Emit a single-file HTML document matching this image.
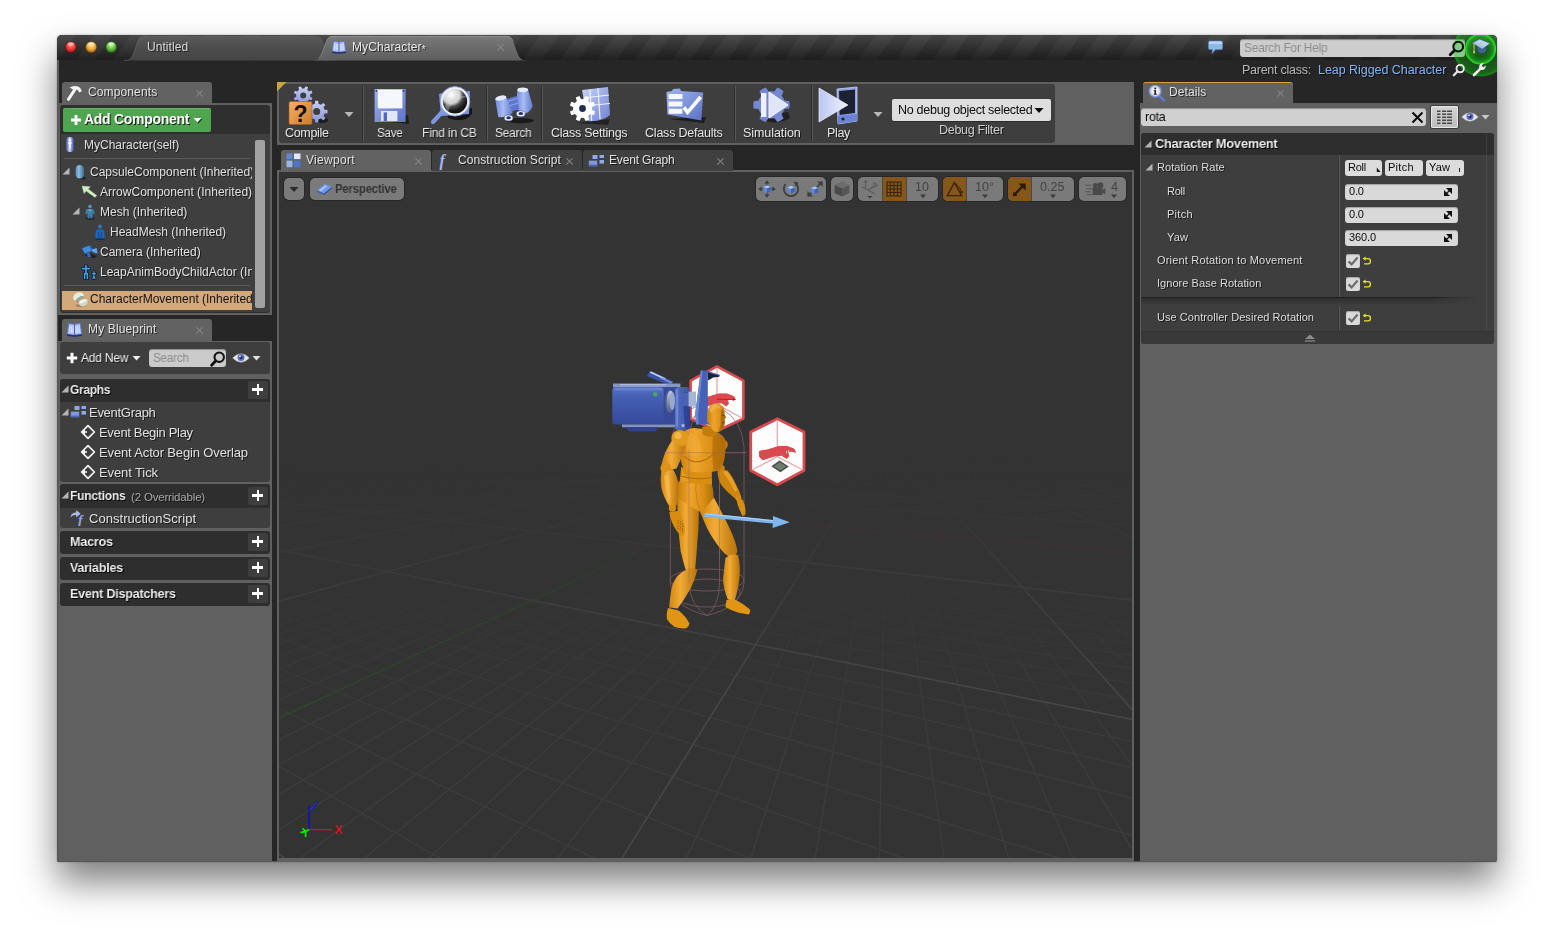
<!DOCTYPE html>
<html lang="en">
<head>
<meta charset="utf-8">
<title>MyCharacter - Blueprint Editor</title>
<style>
html,body{margin:0;padding:0;background:#fff;}
body{width:1554px;height:941px;overflow:hidden;position:relative;font-family:"Liberation Sans",sans-serif;font-size:12px;color:#e4e4e4;}
#shadow{position:absolute;left:57px;top:35px;width:1440px;height:827px;border-radius:5px 5px 2px 2px;box-shadow:0 20px 36px rgba(0,0,0,.50),0 0 2px rgba(0,0,0,.35);}
#win{position:absolute;left:57px;top:35px;width:1440px;height:827px;border-radius:5px 5px 2px 2px;overflow:hidden;background:#606060;}
#pg{position:absolute;left:-57px;top:-35px;width:1554px;height:941px;}
#pg span{will-change:transform;}
#pg div,#pg span,#pg svg{position:absolute;box-sizing:border-box;}
.t{white-space:pre;line-height:16px;height:16px;text-shadow:1px 1px 0 rgba(0,0,0,.6);color:#e0e0e0;}
.b{font-weight:bold;}
.dk{background:#262626;}
.x{width:8px;height:8px;}
.x:before,.x:after{content:"";position:absolute;left:3.5px;top:0px;width:1px;height:8.6px;background:#888;}
.x:before{transform:rotate(45deg);}
.x:after{transform:rotate(-45deg);}
.sec{background:#3e3e3e;border-radius:3px;}
.sech{background:#2e2e2e;border-radius:3px 3px 0 0;}
.plus{width:20px;height:18px;background:#3e3e3e;border-radius:2px;}
.plus:before{content:"";position:absolute;left:4.4px;top:7.4px;width:11px;height:2.4px;background:#fff;}
.plus:after{content:"";position:absolute;left:8.7px;top:3px;width:2.4px;height:11px;background:#fff;}
.h{font-size:13.5px;color:#ececec;text-shadow:1px 1px 0 #000;line-height:18px;height:18px;}
.m{font-size:13px;}
.tsep{top:86px;width:2px;height:55px;background:#585858;border-left:1px solid #2c2c2c;}
.tl{font-size:12.5px;color:#e6e6e6;}
.vb{height:24px;background:#7a7a7a;border-radius:5px;box-shadow:0 0 0 1px rgba(36,36,36,.7);}
.vo{height:24px;background:#86571b;}
.s{font-size:11px;color:#dcdcdc;}
.k{white-space:pre;line-height:16px;height:16px;font-size:11px;color:#0a0a0a;}
.lb{height:16px;background:#dcdcdc;border-radius:3px;}
.vbx{width:113px;height:16px;background:#d9d9d9;border-radius:3px;box-shadow:inset 0 1px 1px rgba(0,0,0,.25);}
.cb{width:14px;height:14px;background:#dadada;border-radius:2px;box-shadow:inset 0 1px 1px rgba(0,0,0,.25);}
.gl{stroke:#3c3c3c;stroke-width:1.5;}
.gM{stroke:#464646;stroke-width:1.7;}
.gR{stroke:#553030;stroke-width:1.4;}
.gG{stroke:#2d482d;stroke-width:1.5;}
.vn{white-space:pre;line-height:16px;height:16px;font-size:12.5px;color:#444;}
#t_untitled{letter-spacing:0.055px;margin-left:0.0px;}
#t_mychar{letter-spacing:0.087px;margin-left:0.1px;}
#t_sfh{letter-spacing:-0.199px;margin-left:0.0px;transform:scaleX(0.947);transform-origin:0 50%;}
#t_pc{letter-spacing:-0.261px;margin-left:0.0px;}
#t_lrc{letter-spacing:-0.046px;margin-left:0.2px;}
#t_components{letter-spacing:0.121px;margin-left:-0.2px;}
#t_addcomp{letter-spacing:-0.278px;margin-left:-0.6px;}
#t_c0{letter-spacing:-0.004px;margin-left:-0.2px;}
#t_c2{letter-spacing:0.027px;margin-left:-0.1px;}
#t_myblueprint{letter-spacing:0.139px;margin-left:-0.2px;}
#t_addnew{letter-spacing:-0.243px;margin-left:-0.2px;transform:scaleX(0.964);transform-origin:0 50%;}
#t_search{letter-spacing:-0.231px;margin-left:0.0px;transform:scaleX(0.934);transform-origin:0 50%;}
#t_graphs{letter-spacing:-0.292px;margin-left:0.2px;transform:scaleX(0.883);transform-origin:0 50%;}
#t_functions{letter-spacing:-0.255px;margin-left:0.2px;transform:scaleX(0.892);transform-origin:0 50%;}
#t_overr{letter-spacing:-0.180px;margin-left:-0.2px;}
#t_macros{letter-spacing:-0.275px;margin-left:0.2px;transform:scaleX(0.937);transform-origin:0 50%;}
#t_variables{letter-spacing:-0.227px;margin-left:0.2px;transform:scaleX(0.924);transform-origin:0 50%;}
#t_evdisp{letter-spacing:-0.231px;margin-left:0.2px;transform:scaleX(0.929);transform-origin:0 50%;}
#t_eventgraph{letter-spacing:-0.282px;margin-left:-0.2px;}
#t_eabo{letter-spacing:-0.146px;margin-left:-0.1px;}
#t_cscript{letter-spacing:0.050px;margin-left:-0.2px;}
#t_ebp{letter-spacing:-0.330px;margin-left:-0.1px;}
#t_etick{letter-spacing:-0.102px;margin-left:-0.1px;}
#t_compile{letter-spacing:-0.317px;margin-left:-0.1px;}
#t_save{letter-spacing:-0.262px;margin-left:0.1px;transform:scaleX(0.932);transform-origin:0 50%;}
#t_findcb{letter-spacing:-0.190px;margin-left:-0.1px;transform:scaleX(0.969);transform-origin:0 50%;}
#t_searchtb{letter-spacing:-0.226px;margin-left:-0.3px;transform:scaleX(0.954);transform-origin:0 50%;}
#t_classset{letter-spacing:-0.252px;margin-left:-0.2px;}
#t_classdef{letter-spacing:-0.214px;margin-left:-0.2px;}
#t_simulation{letter-spacing:-0.061px;margin-left:-0.5px;}
#t_play{letter-spacing:-0.322px;margin-left:-0.2px;}
#t_nodebug{letter-spacing:-0.280px;margin-left:-0.5px;}
#t_dbgfilter{letter-spacing:-0.295px;margin-left:-0.2px;}
#t_viewport{letter-spacing:0.295px;margin-left:0.3px;}
#t_conscript{letter-spacing:0.088px;margin-left:-0.1px;}
#t_evgraph{letter-spacing:-0.160px;margin-left:-0.5px;}
#t_persp{letter-spacing:-0.220px;margin-left:0.1px;transform:scaleX(0.910);transform-origin:0 50%;}
#t_details{letter-spacing:0.110px;margin-left:-0.5px;}
#t_rota{letter-spacing:-0.202px;margin-left:-0.1px;transform:scaleX(0.949);transform-origin:0 50%;}
#t_charmov{letter-spacing:-0.242px;margin-left:-0.5px;transform:scaleX(0.947);transform-origin:0 50%;}
#t_rotrate{letter-spacing:0.035px;margin-left:-0.5px;}
#t_roll{letter-spacing:-0.272px;margin-left:-0.2px;}
#t_pitch{letter-spacing:0.274px;margin-left:-0.2px;}
#t_yaw{letter-spacing:0.203px;margin-left:-0.2px;}
#t_orient{letter-spacing:0.184px;margin-left:-0.5px;}
#t_ignore{letter-spacing:0.048px;margin-left:-0.5px;}
#t_usectrl{letter-spacing:0.056px;margin-left:-0.5px;}
#t_bRoll{letter-spacing:-0.272px;margin-left:-0.2px;}
#t_bPitch{letter-spacing:0.274px;margin-left:-0.3px;}
#t_bYaw{letter-spacing:0.202px;margin-left:-0.1px;}
#t_v0{letter-spacing:-0.159px;margin-left:-0.2px;}
#t_v1{letter-spacing:-0.159px;margin-left:-0.2px;}
#t_v2{letter-spacing:-0.118px;margin-left:-0.2px;}

</style>
</head>
<body>
<div id="shadow"></div>
<div id="win"><div id="pg">

<!-- ===== base areas ===== -->
<div class="dk" style="left:57px;top:35px;width:1440px;height:68px;"></div>
<div class="dk" style="left:272px;top:82px;width:5px;height:780px;"></div>
<div class="dk" style="left:1134px;top:82px;width:6px;height:780px;"></div>

<!-- ===== TITLEBAR ===== -->
<div style="left:57px;top:35px;width:1440px;height:25px;background:linear-gradient(to bottom,rgba(255,255,255,.13),rgba(255,255,255,.05) 40%,rgba(0,0,0,.30)),repeating-linear-gradient(125deg,#303030 0,#303030 14.5px,#282828 15.5px,#282828 29.5px,#303030 30.5px);"></div>
<svg style="left:57px;top:35px;" width="1440" height="26" viewBox="57 35 1440 26">
  <defs>
    <linearGradient id="tabA" x1="0" y1="0" x2="0" y2="1"><stop offset="0" stop-color="#7b7b7b"/><stop offset=".5" stop-color="#6a6a6a"/><stop offset="1" stop-color="#5f5f5f"/></linearGradient>
    <linearGradient id="tabI" x1="0" y1="0" x2="0" y2="1"><stop offset="0" stop-color="#5a5a5a"/><stop offset=".5" stop-color="#4c4c4c"/><stop offset="1" stop-color="#454545"/></linearGradient>
    <radialGradient id="tlr" cx=".5" cy=".35" r=".65"><stop offset="0" stop-color="#ff8a80"/><stop offset=".55" stop-color="#ee3b3b"/><stop offset="1" stop-color="#a31818"/></radialGradient>
    <radialGradient id="tly" cx=".5" cy=".35" r=".65"><stop offset="0" stop-color="#ffe39a"/><stop offset=".55" stop-color="#f4ae3c"/><stop offset="1" stop-color="#a86a12"/></radialGradient>
    <radialGradient id="tlg" cx=".5" cy=".35" r=".65"><stop offset="0" stop-color="#c9f29a"/><stop offset=".55" stop-color="#69c343"/><stop offset="1" stop-color="#2f7d1c"/></radialGradient>
  </defs>
  <path d="M124 60.5 C131 60.5 132 57 134 52 L138 41 C139.5 37.5 141 36.2 145 36.2 L316 36.2 C320 36.2 321.5 37.5 323 41 L327 52 C329 57 330 60.5 337 60.5 Z" fill="url(#tabI)"/>
  <path d="M124 60.5 C131 60.5 132 57 134 52 L138 41 C139.5 37.5 141 36.2 145 36.2 L316 36.2" fill="none" stroke="#6a6a6a" stroke-width=".8" opacity=".7"/>
  <path d="M312 60.5 C319 60.5 320.5 57 322.5 52 L326.5 41 C328 37.5 329.5 36 333.5 36 L506 36 C510 36 511.5 37.5 513 41 L517 52 C519 57 520.5 60.5 527 60.5 Z" fill="url(#tabA)"/>
  <path d="M319 58 C321 56 321.5 54.5 322.5 52 L326.5 41 C328 37.5 329.5 36.3 333.5 36.3 L506 36.3 C510 36.3 511.5 37.5 513 41" fill="none" stroke="#9a9a9a" stroke-width=".8" opacity=".8"/>
  <circle cx="70.8" cy="47.2" r="5.8" fill="#5d1010"/><circle cx="70.8" cy="47" r="5.2" fill="url(#tlr)"/>
  <circle cx="91.2" cy="47.2" r="5.8" fill="#6b4708"/><circle cx="91.2" cy="47" r="5.2" fill="url(#tly)"/>
  <circle cx="111.2" cy="47.2" r="5.8" fill="#1f5212"/><circle cx="111.2" cy="47" r="5.2" fill="url(#tlg)"/>
  <ellipse cx="70.8" cy="44" rx="3.2" ry="1.8" fill="#fff" opacity=".45"/>
  <ellipse cx="91.2" cy="44" rx="3.2" ry="1.8" fill="#fff" opacity=".5"/>
  <ellipse cx="111.2" cy="44" rx="3.2" ry="1.8" fill="#fff" opacity=".5"/>
</svg>
<span class="t" id="t_untitled" style="left:147px;top:39px;color:#d8d8d8;">Untitled</span>
<!-- blueprint book icon -->
<svg style="left:331px;top:39px;" width="16" height="16" viewBox="0 0 16 16">
  <path d="M1 12.5 L2.6 2.2 L7.6 3 L8.4 3 L13.4 2.2 L15 12.5 L8.6 13.3 L7.4 13.3 Z" fill="#a9bdf0" stroke="#5570c8" stroke-width=".8"/>
  <path d="M8 3 L8 13.2" stroke="#4a63b8" stroke-width="1"/>
  <path d="M3.6 4.5v6.5M5.2 4.7v6.5M6.6 4.9v6.5M9.4 4.9v6.5M10.8 4.7v6.5M12.4 4.5v6.5" stroke="#e8eeff" stroke-width=".7"/>
  <path d="M1 12.5 L7.4 13.3 L8.6 13.3 L15 12.5 L15 14 L8.6 14.8 L7.4 14.8 L1 14 Z" fill="#23306a"/>
</svg>
<span class="t" id="t_mychar" style="left:352px;top:39px;color:#e8e8e8;">MyCharacter<span style="position:static;font-size:10px;vertical-align:-2px;">*</span></span>
<span class="x" style="left:496px;top:43px;"></span>
<!-- speech bubble -->
<svg style="left:1207px;top:39px;" width="17" height="17" viewBox="0 0 17 17">
  <path d="M3 2 H14 Q15.5 2 15.5 3.5 V9 Q15.5 10.5 14 10.5 H8.5 L5 14.5 L5.6 10.5 H3 Q1.5 10.5 1.5 9 V3.5 Q1.5 2 3 2 Z" fill="#8fb8ea" stroke="#5d8fd0" stroke-width=".6"/>
  <path d="M3 2.6 H14 Q15 2.6 15 3.6 V5 H2 V3.6 Q2 2.6 3 2.6Z" fill="#b7d3f6"/>
</svg>
<!-- search for help -->
<div style="left:1240px;top:39px;width:225px;height:18px;background:#cdcdcd;border-radius:3px;box-shadow:inset 0 1px 1px rgba(0,0,0,.35);"></div>
<span id="t_sfh" style="left:1244px;top:40px;white-space:pre;line-height:16px;font-size:12.5px;color:#8c8c8c;">Search For Help</span>
<!-- green tutorial pulse -->
<div style="left:1452.6px;top:21px;width:56px;height:56px;border-radius:50%;background:radial-gradient(circle closest-side,rgba(0,190,0,.30) 0,rgba(0,190,0,.30) 62%,rgba(0,200,0,.36) 85%,rgba(10,210,10,.55) 96%,rgba(10,210,10,0) 100%);"></div>
<div style="left:1464.4px;top:32.8px;width:32.4px;height:32.4px;border-radius:50%;background:radial-gradient(circle closest-side,rgba(10,120,10,.10) 0,rgba(10,150,10,.18) 50%,rgba(20,190,20,.5) 78%,rgba(40,225,40,.95) 94%,rgba(40,225,40,0) 100%);"></div>
<!-- magnifier in search box -->
<svg style="left:1448px;top:39px;" width="18" height="18" viewBox="0 0 18 18">
  <circle cx="10.2" cy="7.6" r="4.9" fill="none" stroke="#101010" stroke-width="2.1"/>
  <path d="M6.6 11.2 L2.2 15.8" stroke="#101010" stroke-width="2.8" stroke-linecap="round"/>
</svg>
<!-- graduation cap -->
<svg style="left:1471px;top:38px;" width="20" height="18" viewBox="0 0 20 18">
  <path d="M6 8.4 L6.6 14 Q11 17.6 15.6 13 L15 7.4 Z" fill="#3e6488" stroke="#27415c" stroke-width=".5"/>
  <path d="M8.6 1.4 L18.4 5.6 L11.2 10.8 L1.6 5Z" fill="#a9c8ec" stroke="#6f94c4" stroke-width=".5"/>
  <path d="M8.6 1.4 L18.4 5.6 L14 8.6 L5 4Z" fill="#c4dcf6" opacity=".7"/>
  <path d="M3 5.8 V13.6" stroke="#e0b860" stroke-width="1"/>
  <path d="M2.2 13 H3.8 V15.4 H2.2Z" fill="#e8c46a"/>
  <circle cx="9.6" cy="5.4" r=".9" fill="#e0b860"/>
</svg>
<span class="t" id="t_pc" style="left:1242px;top:62px;font-size:12.5px;color:#b9b9b9;">Parent class:</span>
<span class="t" id="t_lrc" style="left:1318px;top:62px;font-size:12.5px;color:#86b6f4;text-shadow:1px 1px 0 rgba(0,0,0,.8);">Leap Rigged Character</span>
<svg style="left:1452px;top:63px;" width="14" height="14" viewBox="0 0 14 14">
  <circle cx="8.2" cy="5.6" r="3.7" fill="none" stroke="#e6e6e6" stroke-width="1.9"/>
  <path d="M5.4 8.5 L1.8 12.2" stroke="#e6e6e6" stroke-width="2.3" stroke-linecap="round"/>
</svg>
<svg style="left:1472px;top:62px;" width="15" height="15" viewBox="0 0 15 15">
  <path d="M2 13 L8.2 6.8" stroke="#efefef" stroke-width="2.6" stroke-linecap="round"/>
  <path d="M13.6 3.2 L11.4 5.4 L9.6 3.6 L11.8 1.4 A3.6 3.6 0 0 0 7.3 6 L8.9 7.7 A3.6 3.6 0 0 0 13.6 3.2 Z" fill="#efefef"/>
</svg>

<div style="left:57px;top:60px;width:1.5px;height:802px;background:#5a5a5a;"></div>
<!-- bottom edge --><div style="left:57px;top:861px;width:1440px;height:1px;background:#565656;"></div>


<!-- ===== LEFT COLUMN ===== -->
<!-- Components tab -->
<div style="left:62px;top:82px;width:150px;height:21.4px;background:#626262;border-radius:3px 3px 0 0;"></div>
<svg style="left:65px;top:84px;" width="18" height="18" viewBox="0 0 18 18">
  <path d="M3.4 15.4 L9.8 5.6" stroke="#f4f4f4" stroke-width="2.9" stroke-linecap="round"/>
  <path d="M4.6 3.4 Q9.4 .6 14 3 Q16.2 4.4 16.8 7.2 L14.2 8.4 Q13.4 5.8 11.6 5.4 L10.6 7 L7.2 5 Z" fill="#f4f4f4"/>
</svg>
<span class="t" id="t_components" style="left:88px;top:84px;">Components</span>
<span class="x" style="left:195px;top:89px;"></span>
<!-- Components panel -->
<div style="left:60px;top:105px;width:210px;height:208px;background:#2f2f2f;border-radius:3px;"></div>
<div style="left:61px;top:134px;width:209px;height:178px;background:#3f3f3f;border-radius:0 0 3px 3px;"></div>
<div style="left:63px;top:108px;width:148px;height:24px;background:#4fa54f;border-radius:2px;box-shadow:inset 0 1px 0 rgba(255,255,255,.12);"></div>
<svg style="left:70px;top:114px;" width="12" height="12" viewBox="0 0 12 12"><path d="M6 1v10M1 6h10" stroke="#fff" stroke-width="2.8"/><path d="M7.2 2v10M2 7.2h10" stroke="#000" stroke-width="0" /></svg>
<span class="t b" id="t_addcomp" style="left:85px;top:110.4px;font-size:14px;line-height:18px;height:18px;color:#fff;text-shadow:1px 1px 0 rgba(0,0,0,.85);">Add Component</span>
<svg style="left:193px;top:117px;" width="10" height="7" viewBox="0 0 10 7"><path d="M1.5 2 L9.5 2 L5.5 6.5Z" fill="#000" opacity=".7"/><path d="M.5 1 L8.5 1 L4.5 5.5Z" fill="#fff"/></svg>

<!-- rows -->
<div style="left:62px;top:291px;width:190px;height:19px;background:#d4a979;"></div>
<div style="left:64px;top:158px;width:186px;height:1px;background:#5c5c5c;"></div>
<div style="left:64px;top:285px;width:186px;height:1px;background:#5c5c5c;"></div>
<div style="left:255px;top:140px;width:10px;height:168px;background:#a2a2a2;border-radius:2px;"></div>
<div id="complist" style="left:61px;top:134px;width:191px;height:178px;overflow:hidden;">
  <span class="t" id="t_c0" style="left:23px;top:3px;">MyCharacter(self)</span>
  <span class="t" id="t_c1" style="left:29px;top:30px;">CapsuleComponent (Inherited)</span>
  <span class="t" id="t_c2" style="left:39px;top:50px;">ArrowComponent (Inherited)</span>
  <span class="t" id="t_c3" style="left:39px;top:70px;">Mesh (Inherited)</span>
  <span class="t" id="t_c4" style="left:49px;top:90px;">HeadMesh (Inherited)</span>
  <span class="t" id="t_c5" style="left:39px;top:110px;">Camera (Inherited)</span>
  <span class="t" id="t_c6" style="left:39px;top:130px;">LeapAnimBodyChildActor (Inherited)</span>
  <span class="t" id="t_c7" style="left:29px;top:157px;color:#111;text-shadow:none;">CharacterMovement (Inherited)</span>
</div>
<!-- tree arrows -->
<svg style="left:62.4px;top:167.4px;" width="8" height="8" viewBox="0 0 8 8"><path d="M7.5 .5V7.5H.5Z" fill="#b4b4b4"/></svg>
<svg style="left:72.4px;top:207.2px;" width="8" height="8" viewBox="0 0 8 8"><path d="M7.5 .5V7.5H.5Z" fill="#b4b4b4"/></svg>
<!-- component icons -->
<svg style="left:64px;top:136px;" width="12" height="17" viewBox="0 0 12 17">
  <defs><linearGradient id="gcap" x1="0" y1="0" x2="1" y2="0"><stop offset="0" stop-color="#3e4fa8"/><stop offset=".45" stop-color="#c9d6ff"/><stop offset="1" stop-color="#3848a0"/></linearGradient></defs>
  <rect x="2" y="1" width="8" height="15" rx="4" fill="url(#gcap)"/>
  <circle cx="6" cy="4" r="1.3" fill="#fff"/><path d="M6 5.6v7" stroke="#fff" stroke-width="1.6"/><path d="M4 7h4" stroke="#fff" stroke-width="1"/>
</svg>
<svg style="left:74px;top:164px;" width="13" height="16" viewBox="0 0 13 16">
  <defs><linearGradient id="gcap2" x1="0" y1="0" x2="1" y2="0"><stop offset="0" stop-color="#4f86b8"/><stop offset=".38" stop-color="#8fc0dc"/><stop offset="1" stop-color="#38689a"/></linearGradient></defs>
  <ellipse cx="8" cy="14" rx="4" ry="1.5" fill="#1a1a1a" opacity=".7"/>
  <rect x="1.5" y="1" width="8.5" height="13.5" rx="4.2" fill="url(#gcap2)"/>
</svg>
<svg style="left:81px;top:185px;" width="17" height="14" viewBox="0 0 17 14">
  <path d="M5 10 L16 13.5 L14 12Z" fill="#1c1c1c" opacity=".6"/>
  <path d="M1 1 L9.5 1.8 L7.2 4 L15.8 10.6 L14 12.6 L5.2 6 L3 8.6 Z" fill="#d2f0c8" stroke="#9fd092" stroke-width=".4"/>
</svg>
<svg style="left:84px;top:204px;" width="12" height="16" viewBox="0 0 12 16">
  <ellipse cx="6" cy="14.5" rx="4.5" ry="1.2" fill="#151515" opacity=".7"/>
  <circle cx="6" cy="2.4" r="1.7" fill="#5f9cc4"/>
  <path d="M2.2 5.6 Q6 4 9.8 5.6 L10.6 10 L9 10 L8.6 7.6 L8.4 14.4 L6.6 14.4 L6 10.6 L5.4 14.4 L3.6 14.4 L3.4 7.6 L3 10 L1.4 10 Z" fill="#3f7fae"/>
  <path d="M4.2 5.4 L6 7.6 L7.8 5.4" fill="#7fb6d8"/>
</svg>
<svg style="left:94px;top:224px;" width="12" height="16" viewBox="0 0 12 16">
  <ellipse cx="6" cy="14.8" rx="4.8" ry="1" fill="#151515" opacity=".7"/>
  <circle cx="6" cy="2.6" r="2" fill="#2f78c0"/>
  <path d="M1.8 6.4 Q6 4 10.2 6.4 L10.8 14.4 L1.2 14.4 Z" fill="#1f66b8"/>
  <path d="M4.6 8 L4.6 14.4 M7.4 8 L7.4 14.4" stroke="#0f3f7c" stroke-width=".8"/>
</svg>
<svg style="left:81px;top:244px;" width="18" height="15" viewBox="0 0 18 15">
  <path d="M3 11 L13 14.5 L16 12 L8 9Z" fill="#151515" opacity=".7"/>
  <path d="M1 4.2 L8.5 1.5 L11 6.8 L3.6 9.6 Z" fill="#3e8ee0"/>
  <path d="M8.5 1.5 L10 1 L12.4 6.2 L11 6.8Z" fill="#1f5ba6"/>
  <path d="M10.6 5.4 L15.6 4 L16.6 9.6 L11.6 8Z" fill="#5aa6f0"/>
  <path d="M5.2 9 L7 13 L10.4 13 L8 8Z" fill="#2a6cc0"/>
</svg>
<svg style="left:81px;top:264px;" width="17" height="16" viewBox="0 0 17 16">
  <g fill="none" stroke-linecap="round" stroke-linejoin="round">
  <path d="M5 1.4 V9.6 M1.4 4.6 H8.6 M3.6 14.6 V9.6 H6.4 V14.6" stroke="#081626" stroke-width="3.2"/>
  <path d="M13 7.4 V11.6 M11.4 9.6 H14.6 M12 14.8 L13 11.6 L14 14.8" stroke="#081626" stroke-width="2.6"/>
  <path d="M5 1.4 V9.6 M1.4 4.6 H8.6 M3.6 14.6 V9.6 H6.4 V14.6" stroke="#3fa2e6" stroke-width="1.6"/>
  <path d="M13 7.4 V11.6 M11.4 9.6 H14.6 M12 14.8 L13 11.6 L14 14.8" stroke="#3fa2e6" stroke-width="1.2"/>
  </g>
</svg>
<svg style="left:72px;top:291px;" width="17" height="17" viewBox="0 0 17 17">
  <ellipse cx="9" cy="14.6" rx="5.6" ry="1.6" fill="#6d5a40" opacity=".45"/>
  <path d="M1.4 8.6 Q.6 2.4 6.4 1.2 Q11.4 .6 12.2 5.2 Q7 4.4 3.6 9.6 Q2 9.6 1.4 8.6Z" fill="#e6eee2"/>
  <path d="M3.6 9.6 Q7 4.4 12.2 5.2 Q11.4 7.6 8.6 9 Q5.6 10.4 3.6 9.6Z" fill="#98aa98"/>
  <path d="M6.2 11.6 Q9.4 7.4 15.4 8.4 Q16.6 13.2 12.4 15.4 Q7.8 16.4 6.2 11.6Z" fill="#cbd9c6"/>
  <path d="M6.2 11.6 Q9.4 7.4 15.4 8.4 Q13.4 11.6 9.6 12.4 Q7.4 12.6 6.2 11.6Z" fill="#eef4ea"/>
  <path d="M4.6 10.2 L7 11.4" stroke="#7a6a50" stroke-width=".8"/>
</svg>

<!-- My Blueprint tab -->
<div class="dk" style="left:58px;top:315px;width:214px;height:26px;"></div>
<div style="left:62px;top:319px;width:150px;height:22px;background:#626262;border-radius:3px 3px 0 0;"></div>
<svg style="left:66px;top:321px;" width="17" height="17" viewBox="0 0 16 16">
  <path d="M1 12.5 L2.6 2.2 L7.6 3 L8.4 3 L13.4 2.2 L15 12.5 L8.6 13.3 L7.4 13.3 Z" fill="#a9bdf0" stroke="#5570c8" stroke-width=".8"/>
  <path d="M8 3 L8 13.2" stroke="#4a63b8" stroke-width="1"/>
  <path d="M3.6 4.5v6.5M5.2 4.7v6.5M6.6 4.9v6.5M9.4 4.9v6.5M10.8 4.7v6.5M12.4 4.5v6.5" stroke="#e8eeff" stroke-width=".7"/>
  <path d="M1 12.5 L7.4 13.3 L8.6 13.3 L15 12.5 L15 14 L8.6 14.8 L7.4 14.8 L1 14 Z" fill="#23306a"/>
</svg>
<span class="t" id="t_myblueprint" style="left:88px;top:321px;">My Blueprint</span>
<span class="x" style="left:195px;top:326px;"></span>
<!-- toolbar -->
<div style="left:60px;top:342px;width:210px;height:32px;background:#3e3e3e;border-radius:3px;"></div>
<svg style="left:66px;top:352px;" width="12" height="12" viewBox="0 0 12 12"><path d="M6 .8v10.4M.8 6h10.4" stroke="#fff" stroke-width="2.9"/></svg>
<span class="t" id="t_addnew" style="left:81px;top:350px;font-size:12.5px;color:#f0f0f0;">Add New</span>
<svg style="left:132px;top:355px;" width="10" height="7" viewBox="0 0 10 7"><path d="M.5 1 L8.5 1 L4.5 5.5Z" fill="#f0f0f0"/></svg>
<div style="left:149px;top:349px;width:77px;height:18px;background:#cbcbcb;border-radius:3px;box-shadow:inset 0 1px 1px rgba(0,0,0,.3);"></div>
<span id="t_search" style="left:153px;top:350px;white-space:pre;line-height:16px;font-size:12.5px;color:#8c8c8c;">Search</span>
<svg style="left:209px;top:350px;" width="18" height="18" viewBox="0 0 18 18">
  <circle cx="10.2" cy="7.2" r="4.7" fill="none" stroke="#101010" stroke-width="2.1"/>
  <path d="M6.8 10.8 L2.6 15.2" stroke="#101010" stroke-width="2.8" stroke-linecap="round"/>
</svg>
<svg class="eye" style="left:232px;top:352px;" width="18" height="12" viewBox="0 0 18 12">
  <path d="M.6 6 Q9 -2.4 17.4 6 Q9 14.4 .6 6Z" fill="#e9e9e9" stroke="#9a9a9a" stroke-width=".6"/>
  <circle cx="9" cy="5.6" r="3.5" fill="#5a6fc0"/><circle cx="9" cy="5.6" r="1.6" fill="#1d2a66"/><circle cx="8" cy="4.4" r=".9" fill="#dfe6ff"/>
</svg>
<svg style="left:252px;top:355px;" width="10" height="7" viewBox="0 0 10 7"><path d="M.5 1 L8.5 1 L4.5 5.5Z" fill="#e0e0e0"/></svg>

<!-- sections -->
<div class="sec" style="left:60px;top:379px;width:210px;height:103px;"></div>
<div class="sech" style="left:60px;top:379px;width:210px;height:23px;"></div>
<div class="sec" style="left:60px;top:484px;width:210px;height:44px;"></div>
<div class="sech" style="left:60px;top:484px;width:210px;height:24px;"></div>
<div class="sech" style="left:60px;top:531px;width:210px;height:23px;border-radius:3px;"></div>
<div class="sech" style="left:60px;top:557px;width:210px;height:23px;border-radius:3px;"></div>
<div class="sech" style="left:60px;top:583px;width:210px;height:23px;border-radius:3px;"></div>
<div class="plus" style="left:248px;top:381px;"></div>
<div class="plus" style="left:248px;top:487px;"></div>
<div class="plus" style="left:248px;top:533px;"></div>
<div class="plus" style="left:248px;top:559px;"></div>
<div class="plus" style="left:248px;top:585px;"></div>
<svg style="left:61px;top:385px;" width="8" height="8" viewBox="0 0 8 8"><path d="M7.5 .5V7.5H.5Z" fill="#b4b4b4"/></svg>
<svg style="left:61px;top:408px;" width="8" height="8" viewBox="0 0 8 8"><path d="M7.5 .5V7.5H.5Z" fill="#b4b4b4"/></svg>
<svg style="left:61px;top:491px;" width="8" height="8" viewBox="0 0 8 8"><path d="M7.5 .5V7.5H.5Z" fill="#b4b4b4"/></svg>
<span class="t b h" id="t_graphs" style="left:70px;top:381px;">Graphs</span>
<span class="t b h" id="t_functions" style="left:70px;top:487px;">Functions</span>
<span class="t" id="t_overr" style="left:131px;top:489px;font-size:11.5px;color:#a8a8a8;">(2 Overridable)</span>
<span class="t b h" id="t_macros" style="left:70px;top:533px;">Macros</span>
<span class="t b h" id="t_variables" style="left:70px;top:559px;">Variables</span>
<span class="t b h" id="t_evdisp" style="left:70px;top:585px;">Event Dispatchers</span>
<!-- event graph icon -->
<svg class="egi" style="left:70px;top:405px;" width="17" height="14" viewBox="0 0 17 14">
  <rect x="4.5" y="1" width="5" height="4" fill="#8fa8e6"/><rect x="11.5" y="1" width="4.5" height="3" fill="#8fa8e6"/>
  <rect x=".8" y="6.6" width="8.4" height="5.6" fill="#7f98dc"/><rect x="11.5" y="6" width="4.5" height="3.6" fill="#8fa8e6"/>
  <rect x=".8" y="10.6" width="8.4" height="1.6" fill="#4e64b4"/>
</svg>
<span class="t m" id="t_eventgraph" style="left:89px;top:405px;">EventGraph</span>
<svg class="dia" style="left:80px;top:424px;" width="16" height="16" viewBox="0 0 16 16"><path d="M8 1.6 L14.4 8 L8 14.4 L1.6 8Z" fill="none" stroke="#f4f4f4" stroke-width="1.7" stroke-linejoin="round"/><path d="M1.6 8 L5 5.4 V10.6Z" fill="#f4f4f4"/><path d="M4 8H7" stroke="#f4f4f4" stroke-width="1.6"/></svg>
<svg class="dia" style="left:80px;top:444px;" width="16" height="16" viewBox="0 0 16 16"><path d="M8 1.6 L14.4 8 L8 14.4 L1.6 8Z" fill="none" stroke="#f4f4f4" stroke-width="1.7" stroke-linejoin="round"/><path d="M1.6 8 L5 5.4 V10.6Z" fill="#f4f4f4"/><path d="M4 8H7" stroke="#f4f4f4" stroke-width="1.6"/></svg>
<svg class="dia" style="left:80px;top:464px;" width="16" height="16" viewBox="0 0 16 16"><path d="M8 1.6 L14.4 8 L8 14.4 L1.6 8Z" fill="none" stroke="#f4f4f4" stroke-width="1.7" stroke-linejoin="round"/><path d="M1.6 8 L5 5.4 V10.6Z" fill="#f4f4f4"/><path d="M4 8H7" stroke="#f4f4f4" stroke-width="1.6"/></svg>
<span class="t m" id="t_ebp" style="left:99px;top:425px;">Event Begin Play</span>
<span class="t m" id="t_eabo" style="left:99px;top:445px;">Event Actor Begin Overlap</span>
<span class="t m" id="t_etick" style="left:99px;top:465px;">Event Tick</span>
<!-- function icon -->
<svg style="left:69px;top:509px;" width="18" height="17" viewBox="0 0 18 17">
  <path d="M1.6 8.2 Q2.2 3.6 7.2 3.6 V1 L11.6 4.8 L7.2 8.6 V6 Q3.6 5.8 1.6 8.2Z" fill="#a9bdf0"/>
  <text x="9" y="15.5" font-family="Liberation Serif,serif" font-style="italic" font-weight="bold" font-size="14" fill="#8ea6ea">f</text>
</svg>
<span class="t m" id="t_cscript" style="left:89px;top:511px;">ConstructionScript</span>


<!-- ===== CENTER ===== -->
<!-- toolbar strip -->
<div style="left:277px;top:82px;width:857px;height:63px;background:#606060;"></div>
<div style="left:279px;top:84px;width:776px;height:59px;background:#3e3e3e;border-radius:3px;"></div>
<svg style="left:277px;top:82px;" width="10" height="10" viewBox="0 0 10 10"><path d="M0 0H9.5L0 9.5Z" fill="#c9a43a"/></svg>
<div class="tsep" style="left:362px;"></div><div class="tsep" style="left:486px;"></div><div class="tsep" style="left:541px;"></div><div class="tsep" style="left:734px;"></div><div class="tsep" style="left:811px;"></div>
<!-- Compile icon -->
<svg style="left:286px;top:84px;" width="44" height="42" viewBox="0 0 44 42">
  <defs>
    <linearGradient id="gq" x1="0" y1="0" x2="1" y2="1"><stop offset="0" stop-color="#f4b06a"/><stop offset="1" stop-color="#d07a2c"/></linearGradient>
    <linearGradient id="gg" x1="0" y1="0" x2="0" y2="1"><stop offset="0" stop-color="#c8d0f4"/><stop offset="1" stop-color="#8a96d6"/></linearGradient>
    
  </defs>
  <ellipse cx="36" cy="36" rx="6" ry="3" fill="#111" opacity=".8"/>
  <path d="M24.11 12.63L26.50 13.86A9.60 9.60 0 0 1 25.48 16.36L22.91 15.55A7.00 7.00 0 0 1 21.29 17.18L22.11 19.75A9.60 9.60 0 0 1 19.61 20.79L18.37 18.40A7.00 7.00 0 0 1 16.07 18.41L14.84 20.80A9.60 9.60 0 0 1 12.34 19.78L13.15 17.21A7.00 7.00 0 0 1 11.52 15.59L8.95 16.41A9.60 9.60 0 0 1 7.91 13.91L10.30 12.67A7.00 7.00 0 0 1 10.29 10.37L7.90 9.14A9.60 9.60 0 0 1 8.92 6.64L11.49 7.45A7.00 7.00 0 0 1 13.11 5.82L12.29 3.25A9.60 9.60 0 0 1 14.79 2.21L16.03 4.60A7.00 7.00 0 0 1 18.33 4.59L19.56 2.20A9.60 9.60 0 0 1 22.06 3.22L21.25 5.79A7.00 7.00 0 0 1 22.88 7.41L25.45 6.59A9.60 9.60 0 0 1 26.49 9.09L24.10 10.33A7.00 7.00 0 0 1 24.11 12.63ZM14.20 11.50a3.00 3.00 0 1 0 6.00 0a3.00 3.00 0 1 0 -6.00 0Z" fill="url(#gg)" fill-rule="evenodd"/>
  <path d="M38.49 25.79L41.49 26.06A10.90 10.90 0 0 1 41.49 29.14L38.49 29.41A8.00 8.00 0 0 1 37.49 31.83L39.42 34.14A10.90 10.90 0 0 1 37.24 36.32L34.93 34.39A8.00 8.00 0 0 1 32.51 35.39L32.24 38.39A10.90 10.90 0 0 1 29.16 38.39L28.89 35.39A8.00 8.00 0 0 1 26.47 34.39L24.16 36.32A10.90 10.90 0 0 1 21.98 34.14L23.91 31.83A8.00 8.00 0 0 1 22.91 29.41L19.91 29.14A10.90 10.90 0 0 1 19.91 26.06L22.91 25.79A8.00 8.00 0 0 1 23.91 23.37L21.98 21.06A10.90 10.90 0 0 1 24.16 18.88L26.47 20.81A8.00 8.00 0 0 1 28.89 19.81L29.16 16.81A10.90 10.90 0 0 1 32.24 16.81L32.51 19.81A8.00 8.00 0 0 1 34.93 20.81L37.24 18.88A10.90 10.90 0 0 1 39.42 21.06L37.49 23.37A8.00 8.00 0 0 1 38.49 25.79ZM27.20 27.60a3.50 3.50 0 1 0 7.00 0a3.50 3.50 0 1 0 -7.00 0Z" fill="url(#gg)" fill-rule="evenodd"/>
  <rect x="3" y="17.5" width="23" height="23" rx="1.5" fill="url(#gq)" stroke="#9a5a1c" stroke-width=".6"/>
  <text x="14.5" y="37.5" text-anchor="middle" font-family="Liberation Sans,sans-serif" font-weight="bold" font-size="23" fill="#111">?</text>
</svg>
<span class="t tl" id="t_compile" style="left:285px;top:125px;">Compile</span>
<svg style="left:344px;top:111px;" width="10" height="7" viewBox="0 0 10 7"><path d="M.5 1 L9.5 1 L5 6Z" fill="#b8b8b8"/></svg>
<!-- Save icon -->
<svg style="left:372px;top:87px;" width="38" height="38" viewBox="0 0 38 38">
  <defs><linearGradient id="gs" x1="0" y1="0" x2="1" y2="1"><stop offset="0" stop-color="#9fb0ec"/><stop offset="1" stop-color="#5f74c8"/></linearGradient></defs>
  <path d="M10 34 L37 37 L36 28 Z" fill="#111" opacity=".7"/>
  <path d="M2.6 2 H33.6 V35 H2.6 Z" fill="url(#gs)"/>
  <rect x="5.8" y="2.6" width="24.6" height="18.8" fill="#f6f7fc"/>
  <rect x="30.8" y="3" width="1.6" height="1.8" fill="#2a3570"/><rect x="3.6" y="3" width="1.4" height="1.8" fill="#2a3570"/>
  <rect x="9" y="24" width="16.4" height="10" fill="#e4e8f6"/>
  <rect x="11.6" y="25.4" width="3.4" height="8.6" fill="#5368bc"/>
</svg>
<span class="t tl" id="t_save" style="left:377px;top:125px;">Save</span>
<!-- Find in CB icon -->
<svg style="left:428px;top:84px;" width="46" height="42" viewBox="0 0 46 42">
  <defs><radialGradient id="gm" cx=".36" cy=".26" r=".85"><stop offset="0" stop-color="#fff"/><stop offset=".38" stop-color="#cfcfcf"/><stop offset=".52" stop-color="#4a4a4a"/><stop offset=".7" stop-color="#1a1a1a"/><stop offset="1" stop-color="#0c0c0c"/></radialGradient></defs>
  <path d="M20 34 Q36 40 44 30 L44 24 L20 30Z" fill="#0e0e0e" opacity=".85"/>
  <path d="M11 10 L17 8 L18 10 L42 7 L41 30 L13 32Z" fill="#7f96e0"/>
  <path d="M5 38 L15 27" stroke="#7f96e0" stroke-width="4.2" stroke-linecap="round"/>
  <circle cx="27" cy="17.3" r="13.4" fill="url(#gm)" stroke="#eef1fc" stroke-width="2.4"/>
  <circle cx="27" cy="17.3" r="14.8" fill="none" stroke="#8fa2e4" stroke-width=".9"/>
  <path d="M17 22 Q22 12 36 12 Q38 12 39 13 Q30 14 25 19 Q21 23 20 28 Q18 26 17 22Z" fill="#d8d8d8" opacity=".35"/>
</svg>
<span class="t tl" id="t_findcb" style="left:422px;top:125px;">Find in CB</span>
<!-- Search binoculars -->
<svg style="left:486px;top:82px;" width="56" height="44" viewBox="486 82 56 44">
  <defs><linearGradient id="gb" x1="0" y1="0" x2="1" y2="0"><stop offset="0" stop-color="#6f88dc"/><stop offset=".45" stop-color="#a9bcf2"/><stop offset="1" stop-color="#6078cc"/></linearGradient></defs>
  <ellipse cx="520" cy="120.6" rx="14" ry="2.6" fill="#101010" opacity=".75"/>
  <path d="M517.3 90 Q522.7 86 528.1 90 L532.8 106 Q531 111 525.6 113.6 L516 109 Z" fill="url(#gb)"/>
  <ellipse cx="522.7" cy="89.8" rx="5.4" ry="2.4" fill="#e6ebfa"/>
  <path d="M506.4 99 L516.6 96 L519.4 109 L510.4 112Z" fill="#5f78cc"/>
  <path d="M507 101.6 L517 98.6 M508.4 106 L518.4 103" stroke="#90a6ea" stroke-width="1"/>
  <path d="M495.2 99 Q500.8 94.6 506.4 97.4 L512.8 112.4 Q508 118 498.2 117 Z" fill="url(#gb)"/>
  <ellipse cx="500.8" cy="98" rx="5.6" ry="2.4" transform="rotate(-12 500.8 98)" fill="#e6ebfa"/>
  <ellipse cx="520.8" cy="113.8" rx="4.4" ry="3" fill="#f0f3fc" stroke="#4a5aa0" stroke-width=".7"/><ellipse cx="520.8" cy="113.6" rx="2.4" ry="1.5" fill="#2a3466"/>
  <ellipse cx="508.6" cy="118" rx="4.4" ry="3" fill="#f0f3fc" stroke="#4a5aa0" stroke-width=".7"/><ellipse cx="508.6" cy="117.8" rx="2.4" ry="1.5" fill="#2a3466"/>
</svg>
<span class="t tl" id="t_searchtb" style="left:495px;top:125px;">Search</span>
<!-- Class Settings -->
<svg style="left:566px;top:85px;" width="46" height="42" viewBox="0 0 46 42">
  <defs><linearGradient id="gc" x1="0" y1="0" x2="1" y2="1"><stop offset="0" stop-color="#c9d4f6"/><stop offset="1" stop-color="#6e83d4"/></linearGradient></defs>
  <path d="M10 38 L42 40 L44 34Z" fill="#111" opacity=".6"/>
  <path d="M16 5 L42 2 L44 30 Q36 37 22 36 Z" fill="url(#gc)"/>
  <path d="M24 4.2 L25.6 35.6 M32 3.4 L34 34 M17 13 L43 10 M18 21 L44 18.5" stroke="#eef2ff" stroke-width="1.2"/>
  <path d="M25.80 24.87L29.05 26.48A12.90 12.90 0 0 1 27.52 30.21L24.08 29.06A9.40 9.40 0 0 1 22.11 31.05L23.27 34.48A12.90 12.90 0 0 1 19.55 36.04L17.92 32.79A9.40 9.40 0 0 1 15.13 32.80L13.52 36.05A12.90 12.90 0 0 1 9.79 34.52L10.94 31.08A9.40 9.40 0 0 1 8.95 29.11L5.52 30.27A12.90 12.90 0 0 1 3.96 26.55L7.21 24.92A9.40 9.40 0 0 1 7.20 22.13L3.95 20.52A12.90 12.90 0 0 1 5.48 16.79L8.92 17.94A9.40 9.40 0 0 1 10.89 15.95L9.73 12.52A12.90 12.90 0 0 1 13.45 10.96L15.08 14.21A9.40 9.40 0 0 1 17.87 14.20L19.48 10.95A12.90 12.90 0 0 1 23.21 12.48L22.06 15.92A9.40 9.40 0 0 1 24.05 17.89L27.48 16.73A12.90 12.90 0 0 1 29.04 20.45L25.79 22.08A9.40 9.40 0 0 1 25.80 24.87Z" fill="#fff"/>
  <circle cx="16.5" cy="23.5" r="3.4" fill="#222c5a"/>
</svg>
<span class="t tl" id="t_classset" style="left:551px;top:125px;">Class Settings</span>
<!-- Class Defaults -->
<svg style="left:662px;top:84px;" width="48" height="42" viewBox="662 84 48 42">
  <defs><linearGradient id="gcd" x1="0" y1="0" x2="1" y2="1"><stop offset="0" stop-color="#9fb2ec"/><stop offset=".5" stop-color="#7f96dc"/><stop offset="1" stop-color="#5a70c0"/></linearGradient></defs>
  <path d="M668 119 L704 123 L706 117Z" fill="#101010" opacity=".7"/>
  <path d="M666.4 92 L672 91 L673 89 L680 88.6 L681 91 L703.2 92.6 L701.4 120.6 L667.4 114.6 Z" fill="url(#gcd)"/>
  <path d="M668.6 94 H682.4 V99 H668.6Z M668.6 101.4 H682.4 V106.4 H668.6Z M668.6 108.8 H682.4 V113.8 H668.6Z" fill="#f6f8ff"/>
  <path d="M684 107.4 L687.6 112.4 L700.6 97" fill="none" stroke="#fff" stroke-width="3.6"/>
</svg>
<span class="t tl" id="t_classdef" style="left:645px;top:125px;">Class Defaults</span>
<!-- Simulation -->
<svg style="left:750px;top:84px;" width="44" height="44" viewBox="0 0 44 44">
  <path d="M14 36 Q26 42 40 34 L38 28 L14 32Z" fill="#111" opacity=".65"/>
  <path d="M34.43 16.60L39.34 17.20A18.20 18.20 0 0 1 39.34 24.40L34.43 25.00A13.60 13.60 0 0 1 31.61 29.90L33.54 34.45A18.20 18.20 0 0 1 27.31 38.05L24.33 34.10A13.60 13.60 0 0 1 18.67 34.10L15.69 38.05A18.20 18.20 0 0 1 9.46 34.45L11.39 29.90A13.60 13.60 0 0 1 8.57 25.00L3.66 24.40A18.20 18.20 0 0 1 3.66 17.20L8.57 16.60A13.60 13.60 0 0 1 11.39 11.70L9.46 7.15A18.20 18.20 0 0 1 15.69 3.55L18.67 7.50A13.60 13.60 0 0 1 24.33 7.50L27.31 3.55A18.20 18.20 0 0 1 33.54 7.15L31.61 11.70A13.60 13.60 0 0 1 34.43 16.60Z" fill="#7387d2"/>
  
  <rect x="11" y="9" width="5.4" height="24" fill="#eef1fc"/>
  <path d="M19 8 L38 21 L19 34Z" fill="#dfe5fa" stroke="#f8f9ff" stroke-width="1"/>
</svg>
<span class="t tl" id="t_simulation" style="left:743px;top:125px;">Simulation</span>
<!-- Play -->
<svg style="left:816px;top:85px;" width="44" height="42" viewBox="0 0 44 42">
  <defs><linearGradient id="gp" x1="0" y1="0" x2="1" y2="0"><stop offset="0" stop-color="#b8c6f2"/><stop offset="1" stop-color="#f2f5ff"/></linearGradient></defs>
  <path d="M21 4 L41 2 L41 36 L22 39 Z" fill="#8fa4e8" stroke="#c9d4fa" stroke-width=".8"/>
  <path d="M23 6 L39 4.4 L39 28 L23.6 30Z" fill="#1d2233"/>
  <path d="M22 31 L41 29 L41 36 L22 39Z" fill="#6b82d6"/><circle cx="27" cy="34" r="1.6" fill="#1d2233"/>
  <path d="M3 3 L32 20 L3 37 Z" fill="url(#gp)" stroke="#fff" stroke-width=".6"/>
</svg>
<span class="t tl" id="t_play" style="left:827px;top:125px;">Play</span>
<svg style="left:873px;top:111px;" width="10" height="7" viewBox="0 0 10 7"><path d="M.5 1 L9.5 1 L5 6Z" fill="#b8b8b8"/></svg>
<div style="left:892px;top:99px;width:159px;height:22px;background:#dedede;border-radius:2px;box-shadow:0 1px 0 rgba(0,0,0,.3);"></div>
<span id="t_nodebug" style="left:898px;top:102px;white-space:pre;line-height:16px;font-size:12.5px;color:#0a0a0a;">No debug object selected</span>
<svg style="left:1034px;top:107px;" width="10" height="7" viewBox="0 0 10 7"><path d="M.5 1 L9.5 1 L5 6Z" fill="#0a0a0a"/></svg>
<span class="t" id="t_dbgfilter" style="left:939px;top:122px;font-size:12.5px;color:#cfcfcf;">Debug Filter</span>

<!-- document tab strip -->
<div class="dk" style="left:277px;top:145px;width:857px;height:27px;"></div>
<div style="left:277px;top:170px;width:857px;height:692px;background:#606060;"></div>
<div style="left:281px;top:150px;width:150px;height:22px;background:#626262;border-radius:3px 3px 0 0;"></div>
<div style="left:432px;top:150px;width:150px;height:21px;background:#404040;border-radius:3px 3px 0 0;"></div>
<div style="left:583px;top:150px;width:150px;height:21px;background:#404040;border-radius:3px 3px 0 0;"></div>
<svg style="left:286px;top:153px;" width="15" height="15" viewBox="0 0 15 15">
  <rect x=".5" y=".5" width="6" height="5.6" fill="#5f86d8"/><rect x="8" y=".5" width="6.5" height="5.6" fill="#dfe8fb"/>
  <rect x=".5" y="7.6" width="6" height="6.6" fill="#9ab6ee"/><rect x="8" y="7.6" width="6.5" height="6.6" fill="#4f74c8"/>
</svg>
<span class="t" id="t_viewport" style="left:306px;top:152px;">Viewport</span>
<span class="x" style="left:414px;top:157px;"></span>
<svg style="left:437px;top:151px;" width="16" height="20" viewBox="0 0 16 20"><text x="2.5" y="14.6" font-family="Liberation Serif,serif" font-style="italic" font-weight="bold" font-size="16" fill="#a9b8f0">f</text></svg>
<span class="t" id="t_conscript" style="left:458px;top:152px;">Construction Script</span>
<span class="x" style="left:565px;top:157px;"></span>
<svg style="left:588px;top:154px;" width="17" height="14" viewBox="0 0 17 14">
  <rect x="4.5" y="1" width="5" height="4" fill="#8fa8e6"/><rect x="11.5" y="1" width="4.5" height="3" fill="#8fa8e6"/>
  <rect x=".8" y="6.6" width="8.4" height="5.6" fill="#7f98dc"/><rect x="11.5" y="6" width="4.5" height="3.6" fill="#8fa8e6"/>
  <rect x=".8" y="10.6" width="8.4" height="1.6" fill="#4e64b4"/>
</svg>
<span class="t" id="t_evgraph" style="left:609px;top:152px;">Event Graph</span>
<span class="x" style="left:716px;top:157px;"></span>

<!-- VIEWPORT -->
<div id="vp" style="left:279px;top:172px;width:853px;height:686px;background:#333;overflow:hidden;">
<svg style="left:0;top:0;" width="853" height="686" viewBox="279 172 853 686">
<defs>
<linearGradient id="gfade" gradientUnits="userSpaceOnUse" x1="0" y1="470" x2="0" y2="770"><stop offset="0" stop-color="#fff" stop-opacity="0"/><stop offset=".4" stop-color="#fff" stop-opacity=".16"/><stop offset=".7" stop-color="#fff" stop-opacity=".7"/><stop offset="1" stop-color="#fff" stop-opacity="1"/></linearGradient>
<linearGradient id="gfade2" gradientUnits="userSpaceOnUse" x1="0" y1="455" x2="0" y2="700"><stop offset="0" stop-color="#fff" stop-opacity="0"/><stop offset=".3" stop-color="#fff" stop-opacity=".2"/><stop offset="1" stop-color="#fff" stop-opacity="1"/></linearGradient>
<mask id="gmask2" maskUnits="userSpaceOnUse" x="279" y="172" width="853" height="686"><rect x="279" y="172" width="853" height="686" fill="url(#gfade2)"/></mask>
<mask id="gmask" maskUnits="userSpaceOnUse" x="279" y="172" width="853" height="686"><rect x="279" y="172" width="853" height="686" fill="url(#gfade)"/></mask>
<linearGradient id="oB" x1="0" y1="0" x2="1" y2="0"><stop offset="0" stop-color="#c97f0c"/><stop offset=".35" stop-color="#eea42c"/><stop offset=".7" stop-color="#dc9016"/><stop offset="1" stop-color="#b06c08"/></linearGradient>
<linearGradient id="oL" x1="0" y1="0" x2="1" y2="0"><stop offset="0" stop-color="#cf850e"/><stop offset=".4" stop-color="#f2ac36"/><stop offset="1" stop-color="#b87208"/></linearGradient>
<linearGradient id="camB" x1="0" y1="0" x2="0" y2="1"><stop offset="0" stop-color="#5a74c4"/><stop offset=".25" stop-color="#4560b4"/><stop offset="1" stop-color="#35499a"/></linearGradient>
<linearGradient id="camP" x1="0" y1="0" x2="1" y2="0"><stop offset="0" stop-color="#5670c2"/><stop offset="1" stop-color="#3a4fa4"/></linearGradient>
<linearGradient id="lens" x1="0" y1="0" x2="0" y2="1"><stop offset="0" stop-color="#c4cee6"/><stop offset=".5" stop-color="#8794b8"/><stop offset="1" stop-color="#59668e"/></linearGradient>
</defs>
<g mask="url(#gmask)" fill="none"><line class="gl" x1="830.5" y1="444.4" x2="-2444.7" y2="942.4"/>
<line class="gl" x1="831.8" y1="444.4" x2="-2367.4" y2="942.4"/>
<line class="gl" x1="833.1" y1="444.4" x2="-2290.2" y2="942.4"/>
<line class="gl" x1="834.4" y1="444.4" x2="-2212.9" y2="942.4"/>
<line class="gl" x1="835.6" y1="444.4" x2="-2135.6" y2="942.4"/>
<line class="gl" x1="836.9" y1="444.4" x2="-2058.3" y2="942.4"/>
<line class="gl" x1="838.2" y1="444.4" x2="-1981.0" y2="942.4"/>
<line class="gl" x1="839.5" y1="444.4" x2="-1903.8" y2="942.4"/>
<line class="gl" x1="840.8" y1="444.4" x2="-1826.5" y2="942.4"/>
<line class="gl" x1="843.4" y1="444.4" x2="-1671.9" y2="942.4"/>
<line class="gl" x1="844.7" y1="444.4" x2="-1594.6" y2="942.4"/>
<line class="gl" x1="845.9" y1="444.4" x2="-1517.4" y2="942.4"/>
<line class="gl" x1="847.2" y1="444.4" x2="-1440.1" y2="942.4"/>
<line class="gl" x1="848.5" y1="444.4" x2="-1362.8" y2="942.4"/>
<line class="gl" x1="849.8" y1="444.4" x2="-1285.5" y2="942.4"/>
<line class="gl" x1="851.1" y1="444.4" x2="-1208.2" y2="942.4"/>
<line class="gl" x1="852.4" y1="444.4" x2="-1131.0" y2="942.4"/>
<line class="gl" x1="853.7" y1="444.4" x2="-1053.7" y2="942.4"/>
<line class="gl" x1="856.2" y1="444.4" x2="-899.1" y2="942.4"/>
<line class="gl" x1="857.5" y1="444.4" x2="-821.8" y2="942.4"/>
<line class="gl" x1="858.8" y1="444.4" x2="-744.6" y2="942.4"/>
<line class="gl" x1="860.1" y1="444.4" x2="-667.3" y2="942.4"/>
<line class="gl" x1="861.4" y1="444.4" x2="-590.0" y2="942.4"/>
<line class="gl" x1="862.7" y1="444.4" x2="-512.7" y2="942.4"/>
<line class="gl" x1="864.0" y1="444.4" x2="-435.4" y2="942.4"/>
<line class="gl" x1="865.3" y1="444.4" x2="-358.2" y2="942.4"/>
<line class="gl" x1="866.6" y1="444.4" x2="-280.9" y2="942.4"/>
<line class="gl" x1="869.1" y1="444.4" x2="-126.3" y2="942.4"/>
<line class="gl" x1="870.4" y1="444.4" x2="-49.0" y2="942.4"/>
<line class="gl" x1="871.7" y1="444.4" x2="28.2" y2="942.4"/>
<line class="gl" x1="873.0" y1="444.4" x2="105.5" y2="942.4"/>
<line class="gl" x1="874.3" y1="444.4" x2="182.8" y2="942.4"/>
<line class="gl" x1="875.6" y1="444.4" x2="260.1" y2="942.4"/>
<line class="gl" x1="876.9" y1="444.4" x2="337.4" y2="942.4"/>
<line class="gl" x1="878.1" y1="444.4" x2="414.6" y2="942.4"/>
<line class="gl" x1="879.4" y1="444.4" x2="491.9" y2="942.4"/>
<line class="gl" x1="882.0" y1="444.4" x2="646.5" y2="942.4"/>
<line class="gl" x1="883.3" y1="444.4" x2="723.8" y2="942.4"/>
<line class="gl" x1="884.6" y1="444.4" x2="801.0" y2="942.4"/>
<line class="gl" x1="885.9" y1="444.4" x2="878.3" y2="942.4"/>
<line class="gl" x1="887.2" y1="444.4" x2="955.6" y2="942.4"/>
<line class="gl" x1="888.4" y1="444.4" x2="1032.9" y2="942.4"/>
<line class="gl" x1="889.7" y1="444.4" x2="1110.2" y2="942.4"/>
<line class="gl" x1="891.0" y1="444.4" x2="1187.4" y2="942.4"/>
<line class="gl" x1="892.3" y1="444.4" x2="1264.7" y2="942.4"/>
<line class="gl" x1="894.9" y1="444.4" x2="1419.3" y2="942.4"/>
<line class="gl" x1="896.2" y1="444.4" x2="1496.6" y2="942.4"/>
<line class="gl" x1="897.5" y1="444.4" x2="1573.8" y2="942.4"/>
<line class="gl" x1="898.8" y1="444.4" x2="1651.1" y2="942.4"/>
<line class="gl" x1="900.0" y1="444.4" x2="1728.4" y2="942.4"/>
<line class="gl" x1="901.3" y1="444.4" x2="1805.7" y2="942.4"/>
<line class="gl" x1="902.6" y1="444.4" x2="1883.0" y2="942.4"/>
<line class="gl" x1="903.9" y1="444.4" x2="1960.2" y2="942.4"/>
<line class="gl" x1="905.2" y1="444.4" x2="2037.5" y2="942.4"/>
<line class="gl" x1="907.8" y1="444.4" x2="2192.1" y2="942.4"/>
<line class="gl" x1="909.1" y1="444.4" x2="2269.4" y2="942.4"/>
<line class="gl" x1="910.3" y1="444.4" x2="2346.6" y2="942.4"/>
<line class="gl" x1="911.6" y1="444.4" x2="2423.9" y2="942.4"/>
<line class="gl" x1="912.9" y1="444.4" x2="2501.2" y2="942.4"/>
<line class="gl" x1="914.2" y1="444.4" x2="2578.5" y2="942.4"/>
<line class="gl" x1="915.5" y1="444.4" x2="2655.8" y2="942.4"/>
<line class="gl" x1="916.8" y1="444.4" x2="2733.0" y2="942.4"/>
<line class="gl" x1="918.1" y1="444.4" x2="2810.3" y2="942.4"/>
<line class="gl" x1="920.6" y1="444.4" x2="2964.9" y2="942.4"/>
<line class="gl" x1="921.9" y1="444.4" x2="3042.2" y2="942.4"/>
<line class="gl" x1="923.2" y1="444.4" x2="3119.4" y2="942.4"/>
<line class="gl" x1="924.5" y1="444.4" x2="3196.7" y2="942.4"/>
<line class="gl" x1="925.8" y1="444.4" x2="3274.0" y2="942.4"/>
<line class="gl" x1="927.1" y1="444.4" x2="3351.3" y2="942.4"/>
<line class="gl" x1="928.4" y1="444.4" x2="3428.6" y2="942.4"/>
<line class="gl" x1="929.7" y1="444.4" x2="3505.8" y2="942.4"/>
<line class="gl" x1="931.0" y1="444.4" x2="3583.1" y2="942.4"/>
<line class="gl" x1="933.5" y1="444.4" x2="3737.7" y2="942.4"/>
<line class="gl" x1="934.8" y1="444.4" x2="3815.0" y2="942.4"/>
<line class="gl" x1="936.1" y1="444.4" x2="3892.2" y2="942.4"/>
<line class="gl" x1="937.4" y1="444.4" x2="3969.5" y2="942.4"/>
<line class="gl" x1="938.7" y1="444.4" x2="4046.8" y2="942.4"/>
<line class="gl" x1="940.0" y1="444.4" x2="4124.1" y2="942.4"/>
<line class="gl" x1="941.3" y1="444.4" x2="4201.4" y2="942.4"/>
<line class="gl" x1="942.5" y1="444.4" x2="4278.6" y2="942.4"/>
<line class="gl" x1="943.8" y1="444.4" x2="4355.9" y2="942.4"/>
<line class="gl" x1="946.4" y1="444.4" x2="4510.5" y2="942.4"/>
<line class="gl" x1="947.7" y1="444.4" x2="4587.8" y2="942.4"/>
<line class="gl" x1="949.0" y1="444.4" x2="4665.0" y2="942.4"/>
<line class="gl" x1="950.3" y1="444.4" x2="4742.3" y2="942.4"/>
<line class="gl" x1="951.6" y1="444.4" x2="4819.6" y2="942.4"/>
<line class="gl" x1="952.8" y1="444.4" x2="4896.9" y2="942.4"/>
<line class="gl" x1="954.1" y1="444.4" x2="4974.2" y2="942.4"/>
<line class="gl" x1="955.4" y1="444.4" x2="5051.4" y2="942.4"/>
<line class="gl" x1="956.7" y1="444.4" x2="5128.7" y2="942.4"/>
<line class="gl" x1="-303.9" y1="444.4" x2="-712.9" y2="942.4"/>
<line class="gl" x1="-300.8" y1="444.4" x2="-527.3" y2="942.4"/>
<line class="gl" x1="-297.7" y1="444.4" x2="-341.6" y2="942.4"/>
<line class="gl" x1="-294.6" y1="444.4" x2="-156.0" y2="942.4"/>
<line class="gl" x1="-291.6" y1="444.4" x2="29.6" y2="942.4"/>
<line class="gl" x1="-288.5" y1="444.4" x2="215.3" y2="942.4"/>
<line class="gl" x1="-282.3" y1="444.4" x2="586.6" y2="942.4"/>
<line class="gl" x1="-279.2" y1="444.4" x2="772.2" y2="942.4"/>
<line class="gl" x1="-276.1" y1="444.4" x2="957.8" y2="942.4"/>
<line class="gl" x1="-273.0" y1="444.4" x2="1143.5" y2="942.4"/>
<line class="gl" x1="-269.9" y1="444.4" x2="1329.1" y2="942.4"/>
<line class="gl" x1="-266.8" y1="444.4" x2="1514.8" y2="942.4"/>
<line class="gl" x1="-263.7" y1="444.4" x2="1700.4" y2="942.4"/>
<line class="gl" x1="-260.6" y1="444.4" x2="1886.0" y2="942.4"/>
<line class="gl" x1="-257.5" y1="444.4" x2="2071.7" y2="942.4"/>
<line class="gl" x1="-251.3" y1="444.4" x2="2443.0" y2="942.4"/>
<line class="gl" x1="-248.2" y1="444.4" x2="2628.6" y2="942.4"/>
<line class="gl" x1="-245.1" y1="444.4" x2="2814.2" y2="942.4"/>
<line class="gl" x1="-242.1" y1="444.4" x2="2999.9" y2="942.4"/>
<line class="gl" x1="-239.0" y1="444.4" x2="3185.5" y2="942.4"/>
<line class="gl" x1="-235.9" y1="444.4" x2="3371.2" y2="942.4"/>
<line class="gl" x1="-232.8" y1="444.4" x2="3556.8" y2="942.4"/>
<line class="gl" x1="-229.7" y1="444.4" x2="3742.4" y2="942.4"/>
<line class="gl" x1="-226.6" y1="444.4" x2="3928.1" y2="942.4"/>
<line class="gl" x1="-220.4" y1="444.4" x2="4299.4" y2="942.4"/>
<line class="gl" x1="-217.3" y1="444.4" x2="4485.0" y2="942.4"/>
<line class="gl" x1="-214.2" y1="444.4" x2="4670.6" y2="942.4"/>
<line class="gl" x1="-211.1" y1="444.4" x2="4856.3" y2="942.4"/>
<line class="gl" x1="-208.0" y1="444.4" x2="5041.9" y2="942.4"/>
<line class="gl" x1="-204.9" y1="444.4" x2="5227.6" y2="942.4"/>
<line class="gl" x1="-201.8" y1="444.4" x2="5413.2" y2="942.4"/>
<line class="gl" x1="-198.7" y1="444.4" x2="5598.8" y2="942.4"/>
<line class="gl" x1="-195.6" y1="444.4" x2="5784.5" y2="942.4"/>
<line class="gl" x1="-189.5" y1="444.4" x2="6155.8" y2="942.4"/>
<line class="gl" x1="-186.4" y1="444.4" x2="6341.4" y2="942.4"/>
<line class="gl" x1="-183.3" y1="444.4" x2="6527.0" y2="942.4"/>
<line class="gl" x1="-180.2" y1="444.4" x2="6712.7" y2="942.4"/>
<line class="gl" x1="-177.1" y1="444.4" x2="6898.3" y2="942.4"/>
<line class="gl" x1="-174.0" y1="444.4" x2="7084.0" y2="942.4"/>
<line class="gl" x1="-170.9" y1="444.4" x2="7269.6" y2="942.4"/>
<line class="gl" x1="-167.8" y1="444.4" x2="7455.2" y2="942.4"/>
<line class="gl" x1="-164.7" y1="444.4" x2="7640.9" y2="942.4"/>
<line class="gl" x1="-158.5" y1="444.4" x2="8012.2" y2="942.4"/>
<line class="gl" x1="-155.4" y1="444.4" x2="8197.8" y2="942.4"/>
<line class="gl" x1="-152.3" y1="444.4" x2="8383.4" y2="942.4"/>
<line class="gl" x1="-149.2" y1="444.4" x2="8569.1" y2="942.4"/>
<line class="gl" x1="-146.1" y1="444.4" x2="8754.7" y2="942.4"/>
<line class="gl" x1="-143.0" y1="444.4" x2="8940.4" y2="942.4"/>
<line class="gl" x1="-140.0" y1="444.4" x2="9126.0" y2="942.4"/>
<line class="gl" x1="-136.9" y1="444.4" x2="9311.6" y2="942.4"/>
<line class="gl" x1="-133.8" y1="444.4" x2="9497.3" y2="942.4"/>
<line class="gl" x1="-127.6" y1="444.4" x2="9868.6" y2="942.4"/>
<line class="gl" x1="-124.5" y1="444.4" x2="10054.2" y2="942.4"/>
<line class="gl" x1="-121.4" y1="444.4" x2="10239.8" y2="942.4"/>
<line class="gl" x1="-118.3" y1="444.4" x2="10425.5" y2="942.4"/>
<line class="gl" x1="-115.2" y1="444.4" x2="10611.1" y2="942.4"/>
<line class="gl" x1="-112.1" y1="444.4" x2="10796.8" y2="942.4"/>
<line class="gl" x1="-109.0" y1="444.4" x2="10982.4" y2="942.4"/>
<line class="gl" x1="-105.9" y1="444.4" x2="11168.0" y2="942.4"/>
<line class="gl" x1="-102.8" y1="444.4" x2="11353.7" y2="942.4"/>
<line class="gl" x1="-96.6" y1="444.4" x2="11725.0" y2="942.4"/></g>
<g mask="url(#gmask2)" fill="none"><line class="gM" x1="829.2" y1="444.4" x2="-2522.0" y2="942.4"/>
<line class="gM" x1="842.1" y1="444.4" x2="-1749.2" y2="942.4"/>
<line class="gM" x1="855.0" y1="444.4" x2="-976.4" y2="942.4"/>
<line class="gG" x1="867.8" y1="444.4" x2="-203.6" y2="942.4"/>
<line class="gM" x1="880.7" y1="444.4" x2="569.2" y2="942.4"/>
<line class="gM" x1="893.6" y1="444.4" x2="1342.0" y2="942.4"/>
<line class="gM" x1="906.5" y1="444.4" x2="2114.8" y2="942.4"/>
<line class="gM" x1="919.4" y1="444.4" x2="2887.6" y2="942.4"/>
<line class="gM" x1="932.2" y1="444.4" x2="3660.4" y2="942.4"/>
<line class="gM" x1="945.1" y1="444.4" x2="4433.2" y2="942.4"/>
<line class="gM" x1="-285.4" y1="444.4" x2="400.9" y2="942.4"/>
<line class="gM" x1="-254.4" y1="444.4" x2="2257.3" y2="942.4"/>
<line class="gM" x1="-223.5" y1="444.4" x2="4113.7" y2="942.4"/>
<line class="gR" x1="-192.5" y1="444.4" x2="5970.1" y2="942.4"/>
<line class="gM" x1="-161.6" y1="444.4" x2="7826.5" y2="942.4"/>
<line class="gM" x1="-130.7" y1="444.4" x2="9682.9" y2="942.4"/>
<line class="gM" x1="-99.7" y1="444.4" x2="11539.3" y2="942.4"/></g>
<!-- red hexagon sprites -->
<g id="hex1">
  <path d="M717 366.4 L743.4 380.6 V418.6 L717 431 L690.6 418.6 V380.6Z" fill="#fdfdfd" stroke="#d9494d" stroke-width="2.6" stroke-linejoin="round"/>
  <path d="M717 368 V404.4 M717 404.4 L692 418 M717 404.4 L742 418" stroke="#eba9ab" stroke-width="1.3" fill="none"/>
  <path d="M699.3 398.7 L707.6 397.3 L718.6 393.9 L726.9 393.9 L733.8 396.6 L735.2 399.8 L731.1 398.7 L727.6 399.4 L728.3 404.2 L726.2 405.9 L721.4 402.8 L714.5 403.5 L702.1 407.3 L699.3 404.2Z" fill="#d9494d" stroke="#d9494d" stroke-width="1" stroke-linejoin="round"/>
  <path d="M717 399.4 H734.6" stroke="#e41414" stroke-width="1.1"/><path d="M732.6 397.8 L736 399.4 L732.6 401Z" fill="#e41414"/>
</g>
<g id="hex2">
  <path d="M777.3 418.8 L804 432 V470.4 L777.3 484.8 L750.7 470.4 V432Z" fill="#fdfdfd" stroke="#d9494d" stroke-width="2.8" stroke-linejoin="round"/>
  <path d="M777.3 420 V456.7 M777.3 456.7 L752 470 M777.3 456.7 L803 470" stroke="#eba9ab" stroke-width="1.3" fill="none"/>
  <path d="M759.6 451.2 L767.9 449.8 L778.9 446.4 L787.2 446.4 L794.1 449.1 L795.5 452.3 L791.4 451.2 L787.9 451.9 L788.6 456.7 L786.5 458.4 L781.7 455.3 L774.8 456.0 L762.4 459.8 L759.6 456.7Z" fill="#d9494d" stroke="#d9494d" stroke-width="1" stroke-linejoin="round"/>
  <path d="M786.6 450.6 v2.6 M788.6 450.2 v2.4" stroke="#fff" stroke-width=".7"/>
  <path d="M771.3 466.2 L779.6 460.6 L788.8 466.4 L780.4 472.2Z" fill="#4a4a4a"/><path d="M773.6 466.2 L779.6 462.2 L786.4 466.4 L780.4 470.4Z" fill="#6e7c6e"/>
</g>
<!-- capsule wireframe (behind) -->
<g fill="none" stroke="#8d5f6c" stroke-width=".8" opacity=".85">
  <path d="M670.4 583 V447 Q672 420 690 409 Q707 402 722 409 Q742 420 744 447 V583"/>
  <path d="M689 583 V436 M719.5 583 V470 M700 409 Q690 420 689 440"/>
  <path d="M664.6 452.7 H746.4"/>
  <ellipse cx="707" cy="580" rx="37" ry="11"/>
  <ellipse cx="707" cy="593" rx="33" ry="14"/>
  <path d="M670.4 583 Q672 607 707 615.5 Q742 607 744 583"/>
  <path d="M689 583 Q690 606 707 615.5 M719.5 583 Q719 606 707 615.5"/>
</g>
<!-- camera -->
<g id="camera">
  <path d="M646.6 376 L650.6 370.8 L673.4 381.4 L670 385.6Z" fill="#3b54a8"/>
  <path d="M649.4 372.6 L651 371.4 L665.6 378.2 L664.4 379.4Z" fill="#c9d4f2"/>
  <path d="M660 378.6 L662 377.4 L672.6 382.2 L671 383.6Z" fill="#7a90d6"/>
  <rect x="613" y="383.5" width="67.4" height="3.6" fill="#8696c4"/>
  <rect x="620" y="384.2" width="46" height="1.2" fill="#c0cae6" opacity=".8"/>
  <path d="M663 387 H675.4 V424.5 H663Z" fill="#364a98"/>
  <rect x="612.3" y="387" width="51.4" height="37.6" rx="3" fill="url(#camB)"/>
  <rect x="614" y="388" width="48" height="2.4" rx="1.2" fill="#7a92da" opacity=".55"/>
  <rect x="622" y="424.5" width="53.4" height="2.8" fill="#8292c2"/>
  <path d="M625.8 427.2 H658.4 L655.6 431.4 H629Z" fill="#2f4292"/>
  <circle cx="655.2" cy="394.3" r="2.2" fill="#43ae4c"/>
  <ellipse cx="669.8" cy="401.4" rx="4.8" ry="11.6" fill="#56638c"/>
  <ellipse cx="670.6" cy="401.2" rx="3.9" ry="10.4" fill="url(#lens)"/>
  <ellipse cx="672.4" cy="401" rx="2.6" ry="9" fill="#9aa8cc"/>
  <rect x="674.9" y="387" width="15.2" height="43.6" rx="4" fill="url(#camP)"/>
  <path d="M683 392 H690.2 V430.6 H686 Q683.4 420 683 392Z" fill="#2c3f8c" opacity=".8"/>
  <rect x="676.2" y="389" width="2" height="38" rx="1" fill="#7d95dc" opacity=".7"/>
  <rect x="681.6" y="424.2" width="2.8" height="2.8" fill="#a6b4d8"/>
  <rect x="683" y="392.6" width="12.6" height="13.4" fill="#4a62b6"/>
  <rect x="688.6" y="391.6" width="7.4" height="15" fill="#a7b4d2"/>
  <path d="M700.8 370.4 H707.8 V424.6 H696.4 L695.2 414Z" fill="#4560b4"/>
  <path d="M700.8 370.4 H702.6 L698.2 414 L698.6 424.6 H696.4 L695.2 414Z" fill="#6d86d2"/>
  <path d="M707.8 371.2 L719.7 375 L719.3 376.8 L713.1 377.6 L708.1 380.6Z" fill="#1a2034"/>
  <path d="M707.8 371.2 L719.7 375 L719.5 375.8 L707.8 372.4Z" fill="#5a74c4"/>
  <path d="M707.8 421.4 L712.4 421.4 V424.6 H707.8Z" fill="#2b3a80"/>
</g>
<!-- character -->
<g id="char" stroke-linejoin="round">
  <!-- far (viewer right) arm -->
  <circle cx="722.4" cy="444.6" r="5.4" fill="#c47c0c"/>
  <circle cx="720.8" cy="468.8" r="4" fill="#c98110"/>
  <path d="M717.5 472.4 Q722 468.6 727.6 470.6 Q733 477 736 484.4 Q739.6 491 741 496 Q738.6 499.4 735 498.6 Q727.6 492.6 721.2 485 Q717.8 478.6 717.5 472.4Z" fill="#cf860f"/>
  <path d="M722.6 471.6 Q726 470.4 728 472.4 Q733 479 737.6 490 L735 492 Q730 481 722.6 471.6Z" fill="#eca42e" opacity=".85"/>
  <circle cx="738.4" cy="498" r="3" fill="#d98e12"/>
  <path d="M736.6 500 L742.6 499.4 Q746 506 745.4 514.6 L742.4 516 Q741 513 740.2 511 Q737.4 506 736.6 500Z" fill="#d88c10"/>
  <!-- far leg (stepping forward, viewer right) -->
  <path d="M699.6 511 L713.7 497.6 Q722 512 730.4 530 Q736 542 737.4 551 Q736 557 731.6 558 Q724 554 720.6 549 Q712 538 707 528Z" fill="url(#oL)"/>
  <path d="M725.4 558 Q732 553 738.2 555.4 Q741 568 739.2 580 Q737.6 592 734.7 600.4 L727.7 599.6 Q723.4 588 723 579Z" fill="url(#oL)"/>
  <path d="M726.5 600 L736 600 Q744 604 750 609.6 Q750.6 613 749 614.4 Q742 613.6 737.6 612.4 Q730 610 725.4 607Z" fill="#e09514"/>
  <!-- near leg -->
  <path d="M677.4 497 Q688 500 698.8 510 Q699 528 697.3 542 Q696.4 558 695 570 Q691 574 686.6 572.6 Q683 562 680.6 551 Q677 524 677.4 497Z" fill="url(#oL)"/>
  <circle cx="691.6" cy="571" r="4.4" fill="#dc9016"/>
  <path d="M685.6 570 Q692 566 697.3 570 Q695 580 690.3 589 Q684 600 677.6 608.6 L669.2 607.4 Q670 594 672.7 584 Q677 574 685.6 570Z" fill="url(#oL)"/>
  <path d="M668.1 608 L678.6 610.4 Q686 616 689.4 623.6 Q688.6 627.6 685.4 628.4 Q679 628.6 674.6 627 Q669 623 666.9 619 Q666.4 612 668.1 608Z" fill="#e09514"/>
  <!-- pelvis -->
  <path d="M678.6 481.6 L711.7 483.6 Q713.6 490 713.7 497.4 L703.6 510.6 Q700.6 512.6 697.6 510.6 L677.6 498.6 Q677 488 678.6 481.6Z" fill="url(#oB)"/>
  <path d="M696 484 Q695 498 700.4 511" stroke="#b87208" stroke-width=".8" fill="none" opacity=".8"/>
  <!-- abdomen -->
  <path d="M681.2 467 Q696 472.6 711.7 469.6 L712 484.6 L679.6 482.4Z" fill="#d98e12"/>
  <path d="M682 470 L690 482 L681 482Z" fill="#eea42c" opacity=".6"/>
  <path d="M680.4 476 Q696 480.6 711.8 477.6" stroke="#a86608" stroke-width=".9" fill="none"/>
  <!-- chest -->
  <path d="M681 434 Q686 428.6 694 428 L712 430 Q720 432 724.6 438.6 Q726.4 448 724.4 458.4 Q723.6 465 719.4 469.6 Q714 472.6 709.4 471.6 Q696 474.6 684 469.4 Q681 464 680.6 458 Q676 446 681 434Z" fill="url(#oB)"/>
  <path d="M713.6 431 Q711 450 713.6 471 L719.4 469.6 Q724 462 724.4 458.4 Q726.4 448 724.6 438.6 Q720 432.6 713.6 431Z" fill="#b06c08" opacity=".7"/>
  <path d="M684 456 Q690 463 700 461.6 Q707 460 712.6 455" stroke="#a86608" stroke-width="1" fill="none"/>
  <path d="M690 432 Q700 436 702 452 Q696 458 688 455 Q684 444 690 432Z" fill="#f2ae3a" opacity=".55"/>
  <!-- neck + head -->
  <path d="M702 427 L715.4 425.6 L717.4 434.6 Q710 439 702.6 434.6Z" fill="#c47c0c"/>
  <path d="M707.2 416 Q707.6 404 716 403.2 Q723.4 403.6 724.6 411 L724.4 414.4 L726 417.6 L724.4 419 L724.8 422 Q724.6 426.6 722.4 429.6 Q719.6 432.6 716 432 Q711 430 709 425 Q707 420.6 707.2 416Z" fill="url(#oB)"/>
  <path d="M709.6 409 Q712 404.4 717 404.6 Q720 405.6 721 409 Q716 406.6 712 412 Q710.4 414 709.6 409Z" fill="#f4b84e" opacity=".7"/>
  <path d="M721.4 409.6 Q724.6 410.6 724.4 414.4 L726 417.6 L724.4 419 L724.8 422 Q724.6 427 722.4 429.6 Q720.4 431.6 718.4 432 Q721.4 425 720.8 418 Q720.6 413 721.4 409.6Z" fill="#a86608" opacity=".85"/>
  <path d="M722 415 L724.6 415.6 M722.4 422.6 L724.6 422.4" stroke="#6a3e04" stroke-width=".8"/>
  <!-- near arm -->
  <circle cx="679.7" cy="438.1" r="8.2" fill="#e29a1e"/>
  <circle cx="678" cy="435.6" r="3.6" fill="#f6be58" opacity=".8"/>
  <path d="M672.2 440.4 Q679 446.6 685.6 446.6 Q682 458 676.6 468.4 Q669 470.6 661.6 464 Q664.6 450.6 672.2 440.4Z" fill="url(#oL)"/>
  <circle cx="665.8" cy="468" r="5.4" fill="#de9218"/>
  <path d="M661.2 471 Q666 474 672.4 468.6 Q677.4 476 678.6 484.6 Q679 496 677 505 Q673 507.6 669.2 506 Q663 496 661.2 487 Q660.2 478 661.2 471Z" fill="url(#oL)"/>
  <path d="M664 476 Q667 473.6 669 476 Q670.6 488 670.4 500 L668 500 Q664.6 488 664 476Z" fill="#f6be58" opacity=".6"/>
  <circle cx="672.4" cy="508" r="3.7" fill="#d98e12"/>
  <path d="M669.3 512 L677.6 511 Q682.6 516 684.4 526 Q685.4 532 683.6 535.4 L680.6 535.4 L676.4 530.6 Q670.6 522 669.3 512Z" fill="#d88c10"/>
  <path d="M678 520 v9 M680.4 521 v10 M682.6 523 v9" stroke="#8a5206" stroke-width=".8" stroke-dasharray="1.4 1.2"/>
</g>
<!-- capsule wire (front, fainter) -->
<g fill="none" stroke="#8d5f6c" stroke-width=".7" opacity=".55">
  <path d="M689 583 V450 M664.6 452.7 H746.4 M719.5 560 V470"/>
</g>
<!-- forward arrow -->
<path d="M704.4 513 L773 520 L773 516 L789.8 522.2 L772.6 528 L772.8 523.6 L704 517Z" fill="#7eb6ee"/>
<path d="M706 514 L773 520.6" stroke="#b9daf8" stroke-width=".8"/>
<!-- axis gizmo -->
<g>
  <path d="M309 829.6 V805.4" stroke="#0000ff" stroke-width="1.1"/>
  <path d="M309 829.6 H332" stroke="#ff0000" stroke-width="1.2"/>
  <path d="M309 829.6 L305.6 831.4 V837 M305.6 831.4 L300.4 832.6 M305.6 831.4 L302.6 828.4" stroke="#00f000" stroke-width="1.7" fill="none"/>
  <text x="311.6" y="809.6" font-family="Liberation Sans,sans-serif" font-size="12" fill="#1414ff">Z</text>
  <text x="334.2" y="834.2" font-family="Liberation Sans,sans-serif" font-size="12.5" fill="#ff0a0a">X</text>
</g>

</svg>
</div>
<!-- viewport buttons -->
<div class="vb" style="left:284px;top:178px;width:20px;height:22px;"></div>
<svg style="left:289px;top:186px;" width="10" height="7" viewBox="0 0 10 7"><path d="M.5 1 L9.5 1 L5 6Z" fill="#2a2a2a"/></svg>
<div class="vb" style="left:310px;top:178px;width:94px;height:22px;"></div>
<svg style="left:316px;top:182px;" width="17" height="14" viewBox="0 0 17 14">
  <path d="M1 8.5 L9 2 L16 5 L8 11.5Z" fill="#6f9ae8"/><path d="M1 8.5 L8 11.5 V13 L1 10Z" fill="#3a5fb0"/><path d="M8 11.5 L16 5 V6.5 L8 13Z" fill="#2f4f9a"/>
  <path d="M3 8.3 L9 3.4 L11 4.2 L5 9.2Z" fill="#a9c6fa"/>
</svg>
<span id="t_persp" class="b" style="left:335px;top:181px;white-space:pre;line-height:16px;font-size:12.5px;color:#333;">Perspective</span>

<div class="vb" style="left:756px;top:177px;width:70px;"></div>
<div class="vb" style="left:831px;top:177px;width:22px;"></div>
<div class="vb" style="left:858px;top:177px;width:80px;"></div>
<div class="vo" style="left:882px;top:177px;width:25px;border-left:1px solid #4a4a4a;border-right:1px solid #4a4a4a;"></div>
<div class="vb" style="left:943px;top:177px;width:60px;"></div>
<div class="vo" style="left:943px;top:177px;width:24px;border-radius:5px 0 0 5px;border-right:1px solid #4a4a4a;"></div>
<div class="vb" style="left:1008px;top:177px;width:66px;"></div>
<div class="vo" style="left:1008px;top:177px;width:24px;border-radius:5px 0 0 5px;border-right:1px solid #4a4a4a;"></div>
<div class="vb" style="left:1079px;top:177px;width:47px;"></div>
<!-- move -->
<svg style="left:757px;top:179px;" width="20" height="20" viewBox="0 0 20 20">
  <path d="M10 1.2 L12.6 4.6 H7.4Z M10 18.8 L12.6 15.4 H7.4Z M1.2 10 L4.6 7.4 V12.6Z M18.8 10 L15.4 7.4 V12.6Z" fill="#3d3d3d"/>
  <path d="M10 3V17M3 10H17" stroke="#3d3d3d" stroke-width="1"/>
  <path d="M6.4 8 L10 6.4 L13.6 8 V12.4 L10 14 L6.4 12.4Z" fill="#5f86d8"/><path d="M6.4 8 L10 6.4 L13.6 8 L10 9.6Z" fill="#a9c4f6"/><path d="M10 9.6 L13.6 8 V12.4 L10 14Z" fill="#3f62b4"/>
</svg>
<!-- rotate -->
<svg style="left:781px;top:179px;" width="20" height="20" viewBox="0 0 20 20">
  <path d="M15.4 5.2 A7.2 7.2 0 1 1 4.6 5.2" fill="none" stroke="#3d3d3d" stroke-width="1.8"/>
  <path d="M12.6 2.4 L17.4 3.4 L15 7.4Z" fill="#3d3d3d"/>
  <path d="M6.4 8.4 L10 6.8 L13.6 8.4 V12.8 L10 14.4 L6.4 12.8Z" fill="#5f86d8"/><path d="M6.4 8.4 L10 6.8 L13.6 8.4 L10 10Z" fill="#a9c4f6"/><path d="M10 10 L13.6 8.4 V12.8 L10 14.4Z" fill="#3f62b4"/>
</svg>
<!-- scale -->
<svg style="left:805px;top:179px;" width="20" height="20" viewBox="0 0 20 20">
  <path d="M3 17 L17 3" stroke="#3d3d3d" stroke-width="1.6"/>
  <path d="M12 2.4 H17.6 V8Z M2.4 12 V17.6 H8Z" fill="#3d3d3d"/>
  <path d="M6 9 L9.6 7.4 L13.2 9 V13.4 L9.6 15 L6 13.4Z" fill="#5f86d8"/><path d="M6 9 L9.6 7.4 L13.2 9 L9.6 10.6Z" fill="#a9c4f6"/><path d="M9.6 10.6 L13.2 9 V13.4 L9.6 15Z" fill="#3f62b4"/>
</svg>
<!-- cube -->
<svg style="left:833px;top:180px;" width="18" height="18" viewBox="0 0 18 18">
  <path d="M1.6 5 L9 1.6 L16.4 5 L9 8.4Z" fill="#6c6c6c"/><path d="M1.6 5 L9 8.4 V16.6 L1.6 13Z" fill="#4a4a4a"/><path d="M9 8.4 L16.4 5 V13 L9 16.6Z" fill="#565656"/>
</svg>
<!-- surface snapping -->
<svg style="left:860px;top:178px;" width="21" height="22" viewBox="0 0 21 22">
  <path d="M2 9 L8 12 L15 16 M8 12 L18 7" fill="none" stroke="#5a5a5a" stroke-width="1.1"/>
  <path d="M5.6 2.6 V10.4 M3.8 4.6 L5.6 2.4 L7.4 4.6" fill="none" stroke="#5a5a5a" stroke-width="1"/>
  <path d="M9.6 11.4 L15.6 5 M12.6 5 H15.8 V8.2" fill="none" stroke="#5a5a5a" stroke-width="1"/>
  <path d="M7.4 18 H12.6 L10 20.6Z" fill="#3d3d3d"/>
</svg>
<!-- grid -->
<svg style="left:886px;top:181px;" width="16" height="16" viewBox="0 0 16 16">
  <path d="M1 1H15V15H1Z M1 4.5H15 M1 8H15 M1 11.5H15 M4.5 1V15 M8 1V15 M11.5 1V15" fill="none" stroke="#3a2408" stroke-width="1.1"/>
</svg>
<span class="vn" id="t_n10" style="left:915px;top:179px;">10</span>
<svg style="left:919px;top:194px;" width="8" height="5" viewBox="0 0 8 5"><path d="M1 .6H7L4 4.2Z" fill="#3d3d3d"/></svg>
<!-- angle -->
<svg style="left:945px;top:180px;" width="20" height="18" viewBox="0 0 20 18">
  <path d="M2.4 15.6 L9.4 2.4 L16.6 15.6Z" fill="none" stroke="#3a2408" stroke-width="1.4"/>
  <path d="M10.6 4.4 Q15.6 7 16.6 12.4" fill="none" stroke="#3a2408" stroke-width="1"/>
  <path d="M15 11.4 L16.9 14 L18.2 11Z M9.4 4.8 L12.2 3.6 L11 6.2Z" fill="#3a2408"/>
</svg>
<span class="vn" id="t_n10d" style="left:975px;top:179px;">10°</span>
<svg style="left:981px;top:194px;" width="8" height="5" viewBox="0 0 8 5"><path d="M1 .6H7L4 4.2Z" fill="#3d3d3d"/></svg>
<!-- scale snap -->
<svg style="left:1011px;top:181px;" width="17" height="17" viewBox="0 0 17 17">
  <path d="M5 12 L13 4" stroke="#2a1a06" stroke-width="2.4"/>
  <path d="M7.4 2.4 H14.6 V9.6Z" fill="#2a1a06"/>
  <rect x="2" y="11.4" width="3.8" height="3.8" fill="#2a1a06"/>
</svg>
<span class="vn" id="t_n025" style="left:1040px;top:179px;">0.25</span>
<svg style="left:1049px;top:194px;" width="8" height="5" viewBox="0 0 8 5"><path d="M1 .6H7L4 4.2Z" fill="#3d3d3d"/></svg>
<!-- camera speed -->
<svg style="left:1084px;top:181px;" width="22" height="16" viewBox="0 0 22 16">
  <path d="M1 4.4H7 M2.4 7.6H8 M1 10.8H7 M3 13.6H8" stroke="#5a5a5a" stroke-width="1.1"/>
  <circle cx="11.4" cy="4.6" r="2.6" fill="#4a4a4a"/><circle cx="16.4" cy="4.2" r="3" fill="#4a4a4a"/>
  <rect x="8.6" y="6.6" width="10" height="7.4" fill="#4a4a4a"/>
  <path d="M18.6 9 L21.4 7 V13.6 L18.6 11.6Z" fill="#4a4a4a"/>
</svg>
<span class="vn" id="t_n4" style="left:1111px;top:179px;">4</span>
<svg style="left:1110px;top:194px;" width="8" height="5" viewBox="0 0 8 5"><path d="M1 .6H7L4 4.2Z" fill="#3d3d3d"/></svg>



<!-- ===== RIGHT ===== -->
<!-- right column -->
<div class="dk" style="left:1140px;top:82px;width:357px;height:21px;"></div>
<div style="left:1143px;top:82px;width:150px;height:21.4px;background:#626262;border-radius:3px 3px 0 0;border-top:1px solid #c9a93c;"></div>
<svg style="left:1148px;top:84.4px;" width="18.4" height="18.4" viewBox="0 0 20 20">
  <path d="M12 12.5 L17.5 18" stroke="#5f7fe0" stroke-width="2.4" stroke-linecap="round"/>
  <circle cx="7.8" cy="7.8" r="6.3" fill="#dfe2ea" stroke="#7f95e0" stroke-width="1.5"/>
  <circle cx="7.8" cy="7.8" r="4.6" fill="#f4f4f6" stroke="#b0b0b8" stroke-width=".5"/>
  <rect x="7" y="6.8" width="1.8" height="4.6" fill="#222"/><rect x="6.2" y="6.8" width="1.6" height="1" fill="#222"/><rect x="6.2" y="10.6" width="3.4" height="1" fill="#222"/>
  <circle cx="7.9" cy="4.8" r="1.1" fill="#222"/>
</svg>
<span class="t" id="t_details" style="left:1169px;top:84px;">Details</span>
<span class="x" style="left:1276px;top:89px;"></span>
<!-- search -->
<div style="left:1141px;top:108px;width:285px;height:18px;background:#d0d0d0;border-radius:3px;box-shadow:inset 0 1px 1px rgba(0,0,0,.3);"></div>
<span id="t_rota" style="left:1145px;top:109px;white-space:pre;line-height:16px;font-size:13px;color:#0a0a0a;">rota</span>
<svg style="left:1411px;top:111px;" width="13" height="13" viewBox="0 0 13 13"><path d="M1.5 1.5L11.5 11.5M11.5 1.5L1.5 11.5" stroke="#0a0a0a" stroke-width="2"/></svg>
<div style="left:1431px;top:106px;width:27px;height:22px;background:linear-gradient(#d4d4d4,#bcbcbc);border-radius:2px;box-shadow:inset 0 0 0 1px #e8e8e8,0 0 0 1px #3a3a3a;"></div>
<svg style="left:1436px;top:109px;" width="17" height="16" viewBox="0 0 17 16">
  <path d="M1 2.2H4.6M1 5.2H4.6M1 8.2H4.6M1 11.2H4.6M1 14.2H4.6" stroke="#4a4a4a" stroke-width="1.6"/>
  <path d="M6 2.2H16M6 5.2H16M6 8.2H16M6 11.2H16M6 14.2H16" stroke="#4a4a4a" stroke-width="1.6"/>
  <path d="M5.3 1V15.4M10.6 1V15.4" stroke="#cfcfcf" stroke-width=".8"/>
</svg>
<svg style="left:1461px;top:111px;" width="18" height="12" viewBox="0 0 18 12">
  <path d="M.6 6 Q9 -2.4 17.4 6 Q9 14.4 .6 6Z" fill="#e9e9e9" stroke="#9a9a9a" stroke-width=".6"/>
  <circle cx="9" cy="5.6" r="3.5" fill="#5a6fc0"/><circle cx="9" cy="5.6" r="1.6" fill="#1d2a66"/><circle cx="8" cy="4.4" r=".9" fill="#dfe6ff"/>
</svg>
<svg style="left:1481px;top:114px;" width="10" height="7" viewBox="0 0 10 7"><path d="M.5 1 L8.5 1 L4.5 5.5Z" fill="#c8c8c8"/></svg>
<!-- details box -->
<div style="left:1141px;top:133px;width:353px;height:211px;background:#3e3e3e;border-radius:3px;"></div>
<div style="left:1141px;top:133px;width:353px;height:22px;background:#2e2e2e;border-radius:3px 3px 0 0;"></div>
<div style="left:1141px;top:331px;width:353px;height:13px;background:#393939;border-radius:0 0 3px 3px;border-top:1px solid #333;"></div>
<div style="left:1486px;top:133px;width:1px;height:198px;background:rgba(255,255,255,.07);"></div>
<div style="left:1338.4px;top:155px;width:1px;height:142px;background:#363636;box-shadow:1px 0 0 #595959;"></div>
<div style="left:1338.4px;top:306px;width:1px;height:24px;background:#363636;box-shadow:1px 0 0 #595959;"></div>
<div style="left:1141px;top:297px;width:338px;height:8px;background:linear-gradient(to bottom,rgba(0,0,0,.5) 0,rgba(0,0,0,.5) 1px,rgba(0,0,0,.22) 1.5px,rgba(0,0,0,0) 100%);-webkit-mask-image:linear-gradient(to right,#000 85%,transparent);mask-image:linear-gradient(to right,#000 85%,transparent);"></div>
<svg style="left:1144px;top:140px;" width="8" height="8" viewBox="0 0 8 8"><path d="M7.5 .5V7.5H.5Z" fill="#b4b4b4"/></svg>
<span class="t b h" id="t_charmov" style="left:1155px;top:135px;">Character Movement</span>
<svg style="left:1145px;top:163px;" width="8" height="8" viewBox="0 0 8 8"><path d="M7.5 .5V7.5H.5Z" fill="#b4b4b4"/></svg>
<span class="t s" id="t_rotrate" style="left:1157px;top:159px;">Rotation Rate</span>
<span class="t s" id="t_roll" style="left:1167px;top:183px;">Roll</span>
<span class="t s" id="t_pitch" style="left:1167px;top:206px;">Pitch</span>
<span class="t s" id="t_yaw" style="left:1167px;top:229px;">Yaw</span>
<span class="t s" id="t_orient" style="left:1157px;top:252px;">Orient Rotation to Movement</span>
<span class="t s" id="t_ignore" style="left:1157px;top:275px;">Ignore Base Rotation</span>
<span class="t s" id="t_usectrl" style="left:1157px;top:309px;">Use Controller Desired Rotation</span>
<!-- buttons -->
<div class="lb" style="left:1345px;top:160px;width:37px;"></div>
<div class="lb" style="left:1385px;top:160px;width:38px;"></div>
<div class="lb" style="left:1426px;top:160px;width:38px;"></div>
<span class="k" id="t_bRoll" style="left:1348px;top:159px;">Roll</span>
<span class="k" id="t_bPitch" style="left:1388px;top:159px;">Pitch</span>
<span class="k" id="t_bYaw" style="left:1429px;top:159px;">Yaw</span>
<svg style="left:1375.6px;top:166.6px;" width="6" height="6" viewBox="0 0 6 6"><path d="M.8 .6V5H4.6Z" fill="#111"/></svg>
<div style="left:1459px;top:168px;width:1px;height:4px;background:#222;"></div>
<div class="vbx" style="left:1345px;top:184px;"></div>
<div class="vbx" style="left:1345px;top:207px;"></div>
<div class="vbx" style="left:1345px;top:230px;"></div>
<span class="k" id="t_v0" style="left:1349px;top:183px;">0.0</span>
<span class="k" id="t_v1" style="left:1349px;top:206px;">0.0</span>
<span class="k" id="t_v2" style="left:1349px;top:229px;">360.0</span>
<svg class="spin" style="left:1443px;top:187px;" width="10" height="10" viewBox="0 0 10 10"><path d="M3 1H9V7Z M1 3V9H7Z" fill="#111"/><path d="M2 8L8 2" stroke="#111" stroke-width="1.2"/></svg>
<svg class="spin" style="left:1443px;top:210px;" width="10" height="10" viewBox="0 0 10 10"><path d="M3 1H9V7Z M1 3V9H7Z" fill="#111"/><path d="M2 8L8 2" stroke="#111" stroke-width="1.2"/></svg>
<svg class="spin" style="left:1443px;top:233px;" width="10" height="10" viewBox="0 0 10 10"><path d="M3 1H9V7Z M1 3V9H7Z" fill="#111"/><path d="M2 8L8 2" stroke="#111" stroke-width="1.2"/></svg>
<!-- checkboxes -->
<div class="cb" style="left:1346px;top:254px;"></div>
<div class="cb" style="left:1346px;top:277px;"></div>
<div class="cb" style="left:1346px;top:311px;"></div>
<svg style="left:1346px;top:254px;" width="14" height="14" viewBox="0 0 14 14"><path d="M2.6 7.4 L5.6 10.4 L11.6 3.6" fill="none" stroke="#6c6c6c" stroke-width="2.2"/></svg>
<svg style="left:1346px;top:277px;" width="14" height="14" viewBox="0 0 14 14"><path d="M2.6 7.4 L5.6 10.4 L11.6 3.6" fill="none" stroke="#6c6c6c" stroke-width="2.2"/></svg>
<svg style="left:1346px;top:311px;" width="14" height="14" viewBox="0 0 14 14"><path d="M2.6 7.4 L5.6 10.4 L11.6 3.6" fill="none" stroke="#6c6c6c" stroke-width="2.2"/></svg>
<svg style="left:1362px;top:256px;" width="10" height="10" viewBox="0 0 10 10"><path d="M3.2 2.6H6.2Q8.4 2.6 8.4 5.2Q8.4 7.8 6.2 7.8H2" fill="none" stroke="#e9e324" stroke-width="1.3"/><path d="M.6 2.6L3.6 .4V4.8Z" fill="#e9e324"/></svg>
<svg style="left:1362px;top:279px;" width="10" height="10" viewBox="0 0 10 10"><path d="M3.2 2.6H6.2Q8.4 2.6 8.4 5.2Q8.4 7.8 6.2 7.8H2" fill="none" stroke="#e9e324" stroke-width="1.3"/><path d="M.6 2.6L3.6 .4V4.8Z" fill="#e9e324"/></svg>
<svg style="left:1362px;top:313px;" width="10" height="10" viewBox="0 0 10 10"><path d="M3.2 2.6H6.2Q8.4 2.6 8.4 5.2Q8.4 7.8 6.2 7.8H2" fill="none" stroke="#e9e324" stroke-width="1.3"/><path d="M.6 2.6L3.6 .4V4.8Z" fill="#e9e324"/></svg>
<svg style="left:1304px;top:334px;" width="12" height="9" viewBox="0 0 12 9"><path d="M6 .6L11 5H1Z" fill="#8c8c8c"/><path d="M1 6.4H11V7.6H1Z" fill="#8c8c8c"/></svg>


</div></div>
</body>
</html>
